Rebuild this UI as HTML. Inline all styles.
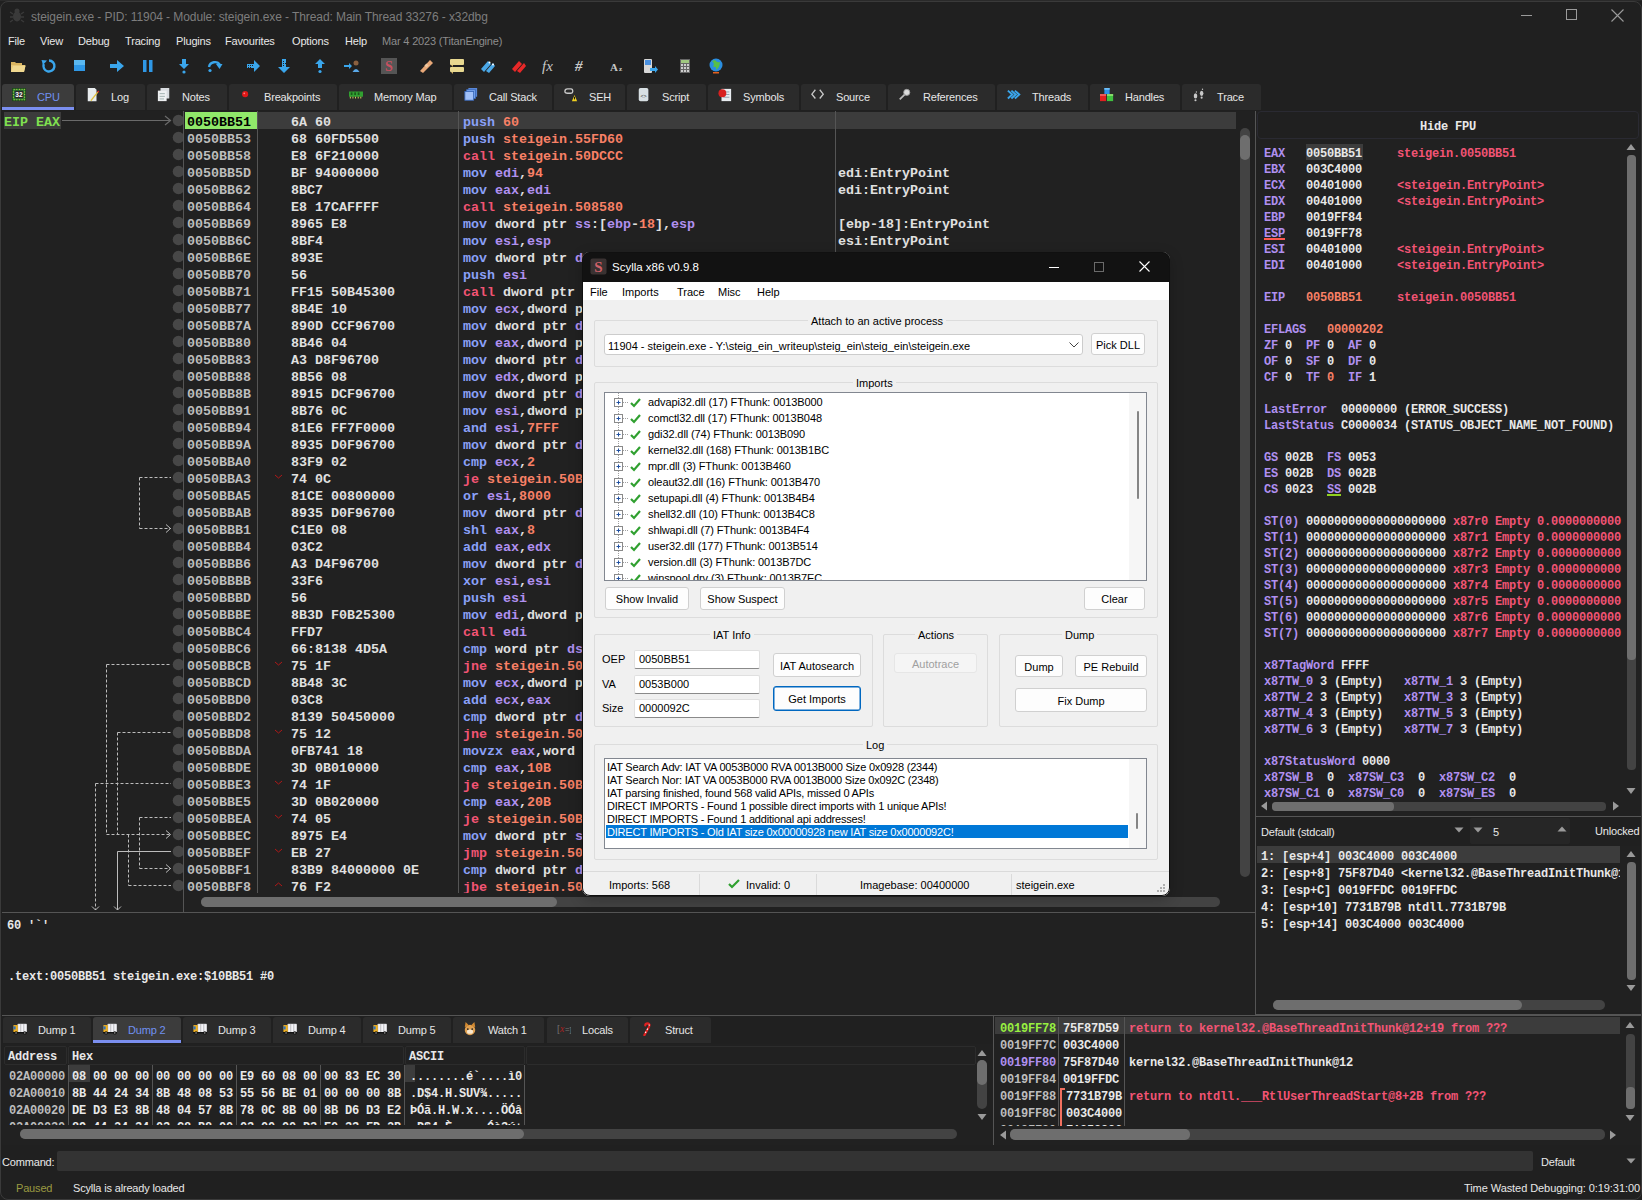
<!DOCTYPE html><html><head><meta charset="utf-8"><style>
*{margin:0;padding:0;box-sizing:border-box}
html,body{width:1642px;height:1200px;overflow:hidden;background:#202020;}
body{position:relative;font-family:'Liberation Sans', sans-serif;color:#e0e0e0;}
.a{position:absolute}
.m{font-family:'Liberation Mono', monospace;font-weight:bold;font-size:13.333px;white-space:pre;}
.ms{font-family:'Liberation Mono', monospace;font-weight:bold;font-size:12px;letter-spacing:-0.2px;white-space:pre;}
.ui{font-family:'Liberation Sans', sans-serif;font-size:11px;letter-spacing:-0.17px;white-space:pre;}
.row{position:absolute;height:17px;line-height:17px;}
.tab{position:absolute;top:84px;height:26px;background:#2b2b2b;border-radius:3px 3px 0 0;}
.tab .lb{position:absolute;top:6px;font-family:'Liberation Sans', sans-serif;font-size:11px;letter-spacing:-0.17px;white-space:pre;color:#e6e6e6;line-height:14px}
.tab .ic{position:absolute;top:4px;width:14px;height:14px}
.dlg{font-family:'Liberation Sans', sans-serif;font-size:11px;color:#000;white-space:pre;padding-top:1px}
.btn{position:absolute;background:#fdfdfd;border:1px solid #d0d0d0;border-radius:3px;text-align:center;font-family:'Liberation Sans', sans-serif;font-size:11px;color:#000;white-space:pre;padding-top:1px}
.grp{position:absolute;border:1px solid #dcdcdc;border-radius:2px}
.gl{position:absolute;background:#f0f0f0;padding:1px 3px 0 3px;font-family:'Liberation Sans', sans-serif;font-size:11px;color:#000;white-space:pre;line-height:14px}
</style></head><body>
<svg class="a" style="left:9px;top:7px" width="16" height="16" viewBox="0 0 16 16"><g fill="#3a3a3a"><ellipse cx="8" cy="9.5" rx="4" ry="5"/><circle cx="8" cy="4" r="2.5"/></g><g stroke="#3a3a3a" stroke-width="1.3" fill="none"><path d="M4 7 L1 5 M4 10 L1 10 M4 13 L1 15 M12 7 L15 5 M12 10 L15 10 M12 13 L15 15"/></g></svg>
<div class="a ui" style="left:31px;top:10px;color:#7d7d7d;font-size:12px;letter-spacing:-0.08px;line-height:14px">steigein.exe - PID: 11904 - Module: steigein.exe - Thread: Main Thread 33276 - x32dbg</div>
<div class="a" style="left:1521px;top:15px;width:11px;height:1px;background:#9a9a9a;"></div>
<div class="a" style="left:1566px;top:9px;width:11px;height:11px;border:1px solid #9a9a9a"></div>
<svg class="a" style="left:1611px;top:9px" width="13" height="13"><path d="M0.5 0.5 L12.5 12.5 M12.5 0.5 L0.5 12.5" stroke="#9a9a9a" stroke-width="1.1"/></svg>
<div class="a ui" style="left:8px;top:34px;color:#e8e8e8;line-height:14px">File</div>
<div class="a ui" style="left:40px;top:34px;color:#e8e8e8;line-height:14px">View</div>
<div class="a ui" style="left:78px;top:34px;color:#e8e8e8;line-height:14px">Debug</div>
<div class="a ui" style="left:125px;top:34px;color:#e8e8e8;line-height:14px">Tracing</div>
<div class="a ui" style="left:176px;top:34px;color:#e8e8e8;line-height:14px">Plugins</div>
<div class="a ui" style="left:225px;top:34px;color:#e8e8e8;line-height:14px">Favourites</div>
<div class="a ui" style="left:292px;top:34px;color:#e8e8e8;line-height:14px">Options</div>
<div class="a ui" style="left:345px;top:34px;color:#e8e8e8;line-height:14px">Help</div>
<div class="a ui" style="left:382px;top:34px;color:#8c8c8c;line-height:14px">Mar 4 2023 (TitanEngine)</div>
<svg class="a" style="left:10px;top:58px" width="16" height="16" viewBox="0 0 16 16"><path d="M1 5 L1 14 L14 14 L15.5 7 L5 7 L4 5 Z" fill="#e8c878"/><path d="M1 4 L5 4 L6 5 L12 5 L12 7 L1 7Z" fill="#d9b460"/><path d="M3 8 L15.5 8 L14 14 L1 14Z" fill="#f0d890"/></svg>
<svg class="a" style="left:41px;top:58px" width="16" height="16" viewBox="0 0 16 16"><path d="M8 2.5 A5.5 5.5 0 1 1 2.8 6" fill="none" stroke="#3aa6ec" stroke-width="2.4"/><path d="M0.5 2 L6 2.5 L2 7Z" fill="#3aa6ec"/></svg>
<svg class="a" style="left:72px;top:58px" width="16" height="16" viewBox="0 0 16 16"><rect x="2" y="2" width="11" height="11" fill="#2f98e6"/><rect x="2" y="2" width="11" height="5" fill="#5ab8f0"/></svg>
<svg class="a" style="left:109px;top:58px" width="16" height="16" viewBox="0 0 16 16"><path d="M1 6 L8 6 L8 2 L15 8 L8 14 L8 10 L1 10Z" fill="#3aa6ec"/></svg>
<svg class="a" style="left:140px;top:58px" width="16" height="16" viewBox="0 0 16 16"><rect x="3" y="2" width="3.5" height="12" fill="#2f98e6"/><rect x="9" y="2" width="3.5" height="12" fill="#2f98e6"/></svg>
<svg class="a" style="left:176px;top:58px" width="16" height="16" viewBox="0 0 16 16"><path d="M6 1 L10 1 L10 6 L13 6 L8 11 L3 6 L6 6Z" fill="#3aa6ec"/><circle cx="8" cy="14" r="1.6" fill="#3aa6ec"/></svg>
<svg class="a" style="left:207px;top:58px" width="16" height="16" viewBox="0 0 16 16"><path d="M2 9 A6 6 0 0 1 13 7" fill="none" stroke="#3aa6ec" stroke-width="2.4"/><path d="M9 6 L15.5 6 L12.5 11Z" fill="#3aa6ec"/><circle cx="3" cy="12.5" r="1.6" fill="#3aa6ec"/></svg>
<svg class="a" style="left:245px;top:58px" width="16" height="16" viewBox="0 0 16 16"><path d="M2 6 L9 6 L9 2 L15 8 L9 14 L9 10 L2 10Z" fill="#3aa6ec"/><g fill="#222"><rect x="3" y="7" width="1" height="1"/><rect x="5" y="7" width="1" height="1"/><rect x="7" y="7" width="1" height="1"/><rect x="3" y="9" width="1" height="1"/><rect x="5" y="9" width="1" height="1"/></g></svg>
<svg class="a" style="left:276px;top:58px" width="16" height="16" viewBox="0 0 16 16"><path d="M6 1 L10 1 L10 9 L14 9 L8 15 L2 9 L6 9Z" fill="#3aa6ec"/><g fill="#222"><rect x="7" y="3" width="1" height="1"/><rect x="7" y="5" width="1" height="1"/><rect x="7" y="7" width="1" height="1"/><rect x="9" y="5" width="1" height="1"/></g></svg>
<svg class="a" style="left:312px;top:58px" width="16" height="16" viewBox="0 0 16 16"><path d="M8 1 L13 6 L10 6 L10 10 L6 10 L6 6 L3 6Z" fill="#3aa6ec"/><circle cx="8" cy="13.5" r="1.6" fill="#3aa6ec"/></svg>
<svg class="a" style="left:344px;top:58px" width="16" height="16" viewBox="0 0 16 16"><path d="M0 7 L5 7 L5 5 L8 8 L5 11 L5 9 L0 9Z" fill="#3aa6ec"/><circle cx="12" cy="5" r="2.5" fill="#8a6040"/><path d="M8.5 14 Q12 8 15.5 14Z" fill="#5aa8e8"/></svg>
<svg class="a" style="left:381px;top:58px" width="16" height="16" viewBox="0 0 16 16"><rect x="0" y="0" width="16" height="16" fill="#555"/><text x="8" y="13" font-family="Liberation Serif" font-weight="bold" font-size="14" fill="#c85060" text-anchor="middle">S</text></svg>
<svg class="a" style="left:418px;top:58px" width="16" height="16" viewBox="0 0 16 16"><path d="M2 13 L12 2 L15 5 L5 15Z" fill="#e8a878"/><rect x="7" y="6" width="3" height="3" fill="#f0c8a0" transform="rotate(45 8.5 7.5)"/></svg>
<svg class="a" style="left:449px;top:58px" width="16" height="16" viewBox="0 0 16 16"><rect x="1" y="1" width="14" height="6" rx="1" fill="#e8d890"/><rect x="1" y="9" width="14" height="5" rx="1" fill="#e8d890"/><path d="M2 7 L4 9 L4 7Z M2 14 L4 16 L4 14Z" fill="#d0b060"/></svg>
<svg class="a" style="left:480px;top:58px" width="16" height="16" viewBox="0 0 16 16"><path d="M1 11 L8 3 L11 6 L4 14Z" fill="#4aa8e8"/><path d="M6 13 L13 5 L15 8 L9 15Z" fill="#4aa8e8"/><circle cx="9.5" cy="4.5" r="1" fill="#fff"/><circle cx="13" cy="6.5" r="1" fill="#fff"/></svg>
<svg class="a" style="left:511px;top:58px" width="16" height="16" viewBox="0 0 16 16"><path d="M1 11 L8 3 L11 6 L4 14Z" fill="#e82828"/><path d="M6 13 L13 5 L15 8 L9 15Z" fill="#e82828"/></svg>
<svg class="a" style="left:542px;top:58px" width="16" height="16" viewBox="0 0 16 16"><text x="0" y="13" font-family="Liberation Serif" font-style="italic" font-size="15" fill="#c8c8c8">fx</text></svg>
<svg class="a" style="left:573px;top:58px" width="16" height="16" viewBox="0 0 16 16"><text x="2" y="13" font-family="Liberation Serif" font-style="italic" font-weight="bold" font-size="15" fill="#c8c8c8">#</text></svg>
<svg class="a" style="left:610px;top:58px" width="16" height="16" viewBox="0 0 16 16"><text x="0" y="13" font-family="Liberation Serif" font-weight="bold" font-size="11" fill="#c8c8c8">A</text><text x="9" y="13" font-family="Liberation Serif" font-weight="bold" font-size="7" fill="#c8c8c8">z</text></svg>
<svg class="a" style="left:642px;top:58px" width="16" height="16" viewBox="0 0 16 16"><rect x="2" y="1" width="8" height="14" rx="1" fill="#d8d8d8"/><rect x="3" y="2" width="6" height="5" fill="#4a90e0"/><path d="M8 10 L13 10 L13 8 L16 11.5 L13 15 L13 13 L8 13Z" fill="#3aa6ec"/></svg>
<svg class="a" style="left:677px;top:58px" width="16" height="16" viewBox="0 0 16 16"><rect x="3" y="1" width="10" height="14" fill="#666"/><rect x="4" y="2" width="8" height="3" fill="#a0c880"/><g fill="#ccc"><rect x="4" y="6" width="2" height="2"/><rect x="7" y="6" width="2" height="2"/><rect x="10" y="6" width="2" height="2"/><rect x="4" y="9" width="2" height="2"/><rect x="7" y="9" width="2" height="2"/><rect x="10" y="9" width="2" height="2"/><rect x="4" y="12" width="2" height="2"/><rect x="7" y="12" width="2" height="2"/><rect x="10" y="12" width="2" height="2"/></g></svg>
<svg class="a" style="left:708px;top:58px" width="16" height="16" viewBox="0 0 16 16"><circle cx="8" cy="7" r="6.5" fill="#2a8ee0"/><path d="M4 3 Q7 5 5 9 Q9 8 8 12 Q12 9 12 4 Q9 5 7 2Z" fill="#58c048"/><rect x="5" y="14" width="6" height="1.5" fill="#e06020"/></svg>
<div class="tab" style="left:2px;width:72px;background:#3c3c3c">
<svg class="ic" style="left:10px" width="16" height="16" viewBox="0 0 16 16"><rect x="0.5" y="0.5" width="15" height="14" fill="#2e8a2e" stroke="#1a4a1a"/><rect x="3" y="3" width="10" height="9" fill="#2a2a2a"/><text x="8" y="10.5" font-family="Liberation Sans" font-weight="bold" font-size="7.5" fill="#ffffff" text-anchor="middle">32</text><g fill="#e8d060"><rect x="2" y="1" width="1" height="1"/><rect x="5" y="1" width="1" height="1"/><rect x="8" y="1" width="1" height="1"/><rect x="11" y="1" width="1" height="1"/><rect x="14" y="1" width="1" height="1"/><rect x="2" y="13" width="1" height="1"/><rect x="5" y="13" width="1" height="1"/><rect x="8" y="13" width="1" height="1"/><rect x="11" y="13" width="1" height="1"/><rect x="14" y="13" width="1" height="1"/><rect x="1" y="4" width="1" height="1"/><rect x="1" y="7" width="1" height="1"/><rect x="1" y="10" width="1" height="1"/><rect x="14" y="4" width="1" height="1"/><rect x="14" y="7" width="1" height="1"/><rect x="14" y="10" width="1" height="1"/></g></svg>
<div class="lb" style="left:35px;color:#7090f0">CPU</div>
<div class="a" style="left:0;top:23px;width:100%;height:3px;background:#7b8ff0"></div>
</div>
<div class="tab" style="left:76px;width:69px;background:#2b2b2b">
<svg class="ic" style="left:10px" width="16" height="16" viewBox="0 0 16 16"><path d="M2 0 L10 0 L12 2 L12 15 L2 15Z" fill="#e8ecee"/><path d="M5 14 L13 4 L14 5 L6 15Z" fill="#e0c040"/><circle cx="14" cy="4" r="1" fill="#e02020"/></svg>
<div class="lb" style="left:35px;color:#e6e6e6">Log</div>
</div>
<div class="tab" style="left:147px;width:80px;background:#2b2b2b">
<svg class="ic" style="left:10px" width="16" height="16" viewBox="0 0 16 16"><rect x="4" y="0" width="10" height="12" fill="#d8dce0"/><rect x="1" y="3" width="10" height="12" fill="#eef0f2"/><g fill="#9aa"><rect x="3" y="6" width="6" height="1"/><rect x="3" y="9" width="6" height="1"/><rect x="3" y="12" width="5" height="1"/></g></svg>
<div class="lb" style="left:35px;color:#e6e6e6">Notes</div>
</div>
<div class="tab" style="left:229px;width:108px;background:#2b2b2b">
<svg class="ic" style="left:10px" width="16" height="16" viewBox="0 0 16 16"><circle cx="7" cy="7" r="3.5" fill="#e01818"/><circle cx="6" cy="6" r="1" fill="#ff8080"/></svg>
<div class="lb" style="left:35px;color:#e6e6e6">Breakpoints</div>
</div>
<div class="tab" style="left:339px;width:113px;background:#2b2b2b">
<svg class="ic" style="left:10px" width="16" height="16" viewBox="0 0 16 16"><rect x="0" y="4" width="16" height="6" fill="#30a030"/><g fill="#e8e060"><rect x="1" y="10" width="1" height="2"/><rect x="4" y="10" width="1" height="2"/><rect x="7" y="10" width="1" height="2"/><rect x="10" y="10" width="1" height="2"/><rect x="13" y="10" width="1" height="2"/></g><g fill="#1a5a1a"><rect x="2" y="5" width="2" height="3"/><rect x="6" y="5" width="2" height="3"/><rect x="10" y="5" width="2" height="3"/></g></svg>
<div class="lb" style="left:35px;color:#e6e6e6">Memory Map</div>
</div>
<div class="tab" style="left:454px;width:98px;background:#2b2b2b">
<svg class="ic" style="left:10px" width="16" height="16" viewBox="0 0 16 16"><rect x="5" y="0" width="10" height="10" fill="#5a88d8"/><rect x="3" y="2" width="10" height="10" fill="#7aa8f0" stroke="#3a68b8" stroke-width="1"/><rect x="1" y="4" width="10" height="10" fill="#a0c0f8" stroke="#3a68b8" stroke-width="1"/></svg>
<div class="lb" style="left:35px;color:#e6e6e6">Call Stack</div>
</div>
<div class="tab" style="left:554px;width:71px;background:#2b2b2b">
<svg class="ic" style="left:10px" width="16" height="16" viewBox="0 0 16 16"><path d="M1 4 Q1 1 4 1 L8 1 Q10 1 10 4 Q10 6 8 6 L4 6 Q1 6 1 4Z" fill="none" stroke="#c8c8c8" stroke-width="1.5"/><path d="M9 15 L12 8 L15 15Z" fill="#f0d020"/><rect x="11.5" y="10" width="1" height="3" fill="#000"/></svg>
<div class="lb" style="left:35px;color:#e6e6e6">SEH</div>
</div>
<div class="tab" style="left:627px;width:79px;background:#2b2b2b">
<svg class="ic" style="left:10px" width="16" height="16" viewBox="0 0 16 16"><rect x="2" y="0" width="11" height="15" rx="2" fill="#d8e0e4"/><text x="7.5" y="11" font-family="Liberation Mono" font-size="6" fill="#333" text-anchor="middle">&lt;&gt;</text></svg>
<div class="lb" style="left:35px;color:#e6e6e6">Script</div>
</div>
<div class="tab" style="left:708px;width:91px;background:#2b2b2b">
<svg class="ic" style="left:10px" width="16" height="16" viewBox="0 0 16 16"><rect x="4" y="1" width="11" height="14" fill="#e8ecf0"/><g fill="#8899aa"><rect x="8" y="4" width="5" height="1"/><rect x="8" y="7" width="5" height="1"/><rect x="6" y="10" width="7" height="1"/></g><circle cx="5" cy="6" r="4.5" fill="#d82020"/></svg>
<div class="lb" style="left:35px;color:#e6e6e6">Symbols</div>
</div>
<div class="tab" style="left:801px;width:85px;background:#2b2b2b">
<svg class="ic" style="left:10px" width="16" height="16" viewBox="0 0 16 16"><path d="M5 2 L1 7 L5 12 M10 2 L14 7 L10 12" fill="none" stroke="#c8c8c8" stroke-width="1.5"/></svg>
<div class="lb" style="left:35px;color:#e6e6e6">Source</div>
</div>
<div class="tab" style="left:888px;width:107px;background:#2b2b2b">
<svg class="ic" style="left:10px" width="16" height="16" viewBox="0 0 16 16"><circle cx="10" cy="5" r="3.5" fill="#ddd" stroke="#999" stroke-width="1"/><path d="M7.5 7.5 L2 13" stroke="#bbb" stroke-width="2"/></svg>
<div class="lb" style="left:35px;color:#e6e6e6">References</div>
</div>
<div class="tab" style="left:997px;width:91px;background:#2b2b2b">
<svg class="ic" style="left:10px" width="16" height="16" viewBox="0 0 16 16"><path d="M1 3 L6 7.5 L1 12 M5 3 L10 7.5 L5 12 M9 3 L14 7.5 L9 12" fill="none" stroke="#3aa6ec" stroke-width="2.2"/></svg>
<div class="lb" style="left:35px;color:#e6e6e6">Threads</div>
</div>
<div class="tab" style="left:1090px;width:90px;background:#2b2b2b">
<svg class="ic" style="left:10px" width="16" height="16" viewBox="0 0 16 16"><rect x="5" y="0" width="6" height="7" fill="#2a90e8"/><rect x="5" y="0" width="6" height="2" fill="#70c0f8"/><rect x="0" y="7" width="7" height="8" fill="#e02020"/><rect x="0" y="7" width="7" height="2" fill="#f06060"/><rect x="8" y="7" width="7" height="8" fill="#40c040"/><rect x="8" y="7" width="7" height="2" fill="#90e070"/></svg>
<div class="lb" style="left:35px;color:#e6e6e6">Handles</div>
</div>
<div class="tab" style="left:1182px;width:79px;background:#2b2b2b">
<svg class="ic" style="left:10px" width="16" height="16" viewBox="0 0 16 16"><g fill="#c8c8c8"><ellipse cx="4" cy="9" rx="2" ry="3"/><ellipse cx="11" cy="6" rx="2" ry="3"/><circle cx="4" cy="14" r="1.2"/><circle cx="11" cy="11" r="1.2"/><circle cx="12" cy="1.5" r="0.8"/><circle cx="5" cy="4.5" r="0.8"/></g></svg>
<div class="lb" style="left:35px;color:#e6e6e6">Trace</div>
</div>
<div class="a" style="left:2px;top:111px;width:1253px;height:801px;background:#212121;"></div>
<div class="a" style="left:0;top:112px;width:1238px;height:781px;overflow:hidden">
<div class="a" style="left:258px;top:0px;width:978px;height:17px;background:#3c3c3c;"></div>
<div class="a" style="left:185px;top:0px;width:72px;height:17px;background:#90e86a;"></div>
<div class="a" style="left:4px;top:0px;width:57px;height:17px;background:#3c3c3c;"></div>
<div class="a m" style="left:4px;top:2px;line-height:17px;color:#80e050">EIP EAX</div>
<div class="row m" style="left:187px;top:2px;color:#000000">0050BB51</div>
<div class="row m" style="left:291px;top:2px;color:#e0e0e0">6A 60</div>
<div class="row m" style="left:463px;top:2px"><span style="color:#8aa0f8">push</span> <span style="color:#f88066">60</span></div>
<div class="row m" style="left:187px;top:19px;color:#bdbdbd">0050BB53</div>
<div class="row m" style="left:291px;top:19px;color:#e0e0e0">68 60FD5500</div>
<div class="row m" style="left:463px;top:19px"><span style="color:#8aa0f8">push</span> <span style="color:#f88066">steigein.55FD60</span></div>
<div class="row m" style="left:187px;top:36px;color:#bdbdbd">0050BB58</div>
<div class="row m" style="left:291px;top:36px;color:#e0e0e0">E8 6F210000</div>
<div class="row m" style="left:463px;top:36px"><span style="color:#f25474">call</span> <span style="color:#f88066">steigein.50DCCC</span></div>
<div class="row m" style="left:187px;top:53px;color:#bdbdbd">0050BB5D</div>
<div class="row m" style="left:291px;top:53px;color:#e0e0e0">BF 94000000</div>
<div class="row m" style="left:463px;top:53px"><span style="color:#8aa0f8">mov</span> <span style="color:#b090f0">edi</span><span style="color:#e0e0e0">,</span><span style="color:#f88066">94</span></div>
<div class="row m" style="left:838px;top:53px;color:#e0e0e0">edi:EntryPoint</div>
<div class="row m" style="left:187px;top:70px;color:#bdbdbd">0050BB62</div>
<div class="row m" style="left:291px;top:70px;color:#e0e0e0">8BC7</div>
<div class="row m" style="left:463px;top:70px"><span style="color:#8aa0f8">mov</span> <span style="color:#b090f0">eax</span><span style="color:#e0e0e0">,</span><span style="color:#b090f0">edi</span></div>
<div class="row m" style="left:838px;top:70px;color:#e0e0e0">edi:EntryPoint</div>
<div class="row m" style="left:187px;top:87px;color:#bdbdbd">0050BB64</div>
<div class="row m" style="left:291px;top:87px;color:#e0e0e0">E8 17CAFFFF</div>
<div class="row m" style="left:463px;top:87px"><span style="color:#f25474">call</span> <span style="color:#f88066">steigein.508580</span></div>
<div class="row m" style="left:187px;top:104px;color:#bdbdbd">0050BB69</div>
<div class="row m" style="left:291px;top:104px;color:#e0e0e0">8965 E8</div>
<div class="row m" style="left:463px;top:104px"><span style="color:#8aa0f8">mov</span> <span style="color:#e0e0e0">dword</span><span style="color:#e0e0e0"> </span><span style="color:#e0e0e0">ptr</span><span style="color:#e0e0e0"> </span><span style="color:#b090f0">ss</span><span style="color:#e0e0e0">:</span><span style="color:#e0e0e0">[</span><span style="color:#b090f0">ebp</span><span style="color:#e0e0e0">-</span><span style="color:#f88066">18</span><span style="color:#e0e0e0">]</span><span style="color:#e0e0e0">,</span><span style="color:#b090f0">esp</span></div>
<div class="row m" style="left:838px;top:104px;color:#e0e0e0">[ebp-18]:EntryPoint</div>
<div class="row m" style="left:187px;top:121px;color:#bdbdbd">0050BB6C</div>
<div class="row m" style="left:291px;top:121px;color:#e0e0e0">8BF4</div>
<div class="row m" style="left:463px;top:121px"><span style="color:#8aa0f8">mov</span> <span style="color:#b090f0">esi</span><span style="color:#e0e0e0">,</span><span style="color:#b090f0">esp</span></div>
<div class="row m" style="left:838px;top:121px;color:#e0e0e0">esi:EntryPoint</div>
<div class="row m" style="left:187px;top:138px;color:#bdbdbd">0050BB6E</div>
<div class="row m" style="left:291px;top:138px;color:#e0e0e0">893E</div>
<div class="row m" style="left:463px;top:138px"><span style="color:#8aa0f8">mov</span> <span style="color:#e0e0e0">dword</span><span style="color:#e0e0e0"> </span><span style="color:#e0e0e0">ptr</span><span style="color:#e0e0e0"> </span><span style="color:#b090f0">ds</span><span style="color:#e0e0e0">:</span><span style="color:#e0e0e0">[</span><span style="color:#b090f0">esi</span><span style="color:#e0e0e0">]</span><span style="color:#e0e0e0">,</span><span style="color:#b090f0">edi</span></div>
<div class="row m" style="left:838px;top:138px;color:#e0e0e0">[esi]:EntryPoint</div>
<div class="row m" style="left:187px;top:155px;color:#bdbdbd">0050BB70</div>
<div class="row m" style="left:291px;top:155px;color:#e0e0e0">56</div>
<div class="row m" style="left:463px;top:155px"><span style="color:#8aa0f8">push</span> <span style="color:#b090f0">esi</span></div>
<div class="row m" style="left:187px;top:172px;color:#bdbdbd">0050BB71</div>
<div class="row m" style="left:291px;top:172px;color:#e0e0e0">FF15 50B45300</div>
<div class="row m" style="left:463px;top:172px"><span style="color:#f25474">call</span> <span style="color:#e0e0e0">dword</span><span style="color:#e0e0e0"> </span><span style="color:#e0e0e0">ptr</span><span style="color:#e0e0e0"> </span><span style="color:#b090f0">ds</span><span style="color:#e0e0e0">:</span><span style="color:#e0e0e0">[</span><span style="color:#e0e0e0">&lt;</span><span style="color:#e0e0e0">&amp;</span><span style="color:#e0e0e0">GetVersionExA</span><span style="color:#e0e0e0">&gt;</span><span style="color:#e0e0e0">]</span></div>
<div class="row m" style="left:187px;top:189px;color:#bdbdbd">0050BB77</div>
<div class="row m" style="left:291px;top:189px;color:#e0e0e0">8B4E 10</div>
<div class="row m" style="left:463px;top:189px"><span style="color:#8aa0f8">mov</span> <span style="color:#b090f0">ecx</span><span style="color:#e0e0e0">,</span><span style="color:#e0e0e0">dword</span><span style="color:#e0e0e0"> </span><span style="color:#e0e0e0">ptr</span><span style="color:#e0e0e0"> </span><span style="color:#b090f0">ds</span><span style="color:#e0e0e0">:</span><span style="color:#e0e0e0">[</span><span style="color:#b090f0">esi</span><span style="color:#e0e0e0">+</span><span style="color:#f88066">10</span><span style="color:#e0e0e0">]</span></div>
<div class="row m" style="left:187px;top:206px;color:#bdbdbd">0050BB7A</div>
<div class="row m" style="left:291px;top:206px;color:#e0e0e0">890D CCF96700</div>
<div class="row m" style="left:463px;top:206px"><span style="color:#8aa0f8">mov</span> <span style="color:#e0e0e0">dword</span><span style="color:#e0e0e0"> </span><span style="color:#e0e0e0">ptr</span><span style="color:#e0e0e0"> </span><span style="color:#b090f0">ds</span><span style="color:#e0e0e0">:</span><span style="color:#e0e0e0">[</span><span style="color:#f88066">67F9CC</span><span style="color:#e0e0e0">]</span><span style="color:#e0e0e0">,</span><span style="color:#b090f0">ecx</span></div>
<div class="row m" style="left:187px;top:223px;color:#bdbdbd">0050BB80</div>
<div class="row m" style="left:291px;top:223px;color:#e0e0e0">8B46 04</div>
<div class="row m" style="left:463px;top:223px"><span style="color:#8aa0f8">mov</span> <span style="color:#b090f0">eax</span><span style="color:#e0e0e0">,</span><span style="color:#e0e0e0">dword</span><span style="color:#e0e0e0"> </span><span style="color:#e0e0e0">ptr</span><span style="color:#e0e0e0"> </span><span style="color:#b090f0">ds</span><span style="color:#e0e0e0">:</span><span style="color:#e0e0e0">[</span><span style="color:#b090f0">esi</span><span style="color:#e0e0e0">+</span><span style="color:#f88066">4</span><span style="color:#e0e0e0">]</span></div>
<div class="row m" style="left:187px;top:240px;color:#bdbdbd">0050BB83</div>
<div class="row m" style="left:291px;top:240px;color:#e0e0e0">A3 D8F96700</div>
<div class="row m" style="left:463px;top:240px"><span style="color:#8aa0f8">mov</span> <span style="color:#e0e0e0">dword</span><span style="color:#e0e0e0"> </span><span style="color:#e0e0e0">ptr</span><span style="color:#e0e0e0"> </span><span style="color:#b090f0">ds</span><span style="color:#e0e0e0">:</span><span style="color:#e0e0e0">[</span><span style="color:#f88066">67F9D8</span><span style="color:#e0e0e0">]</span><span style="color:#e0e0e0">,</span><span style="color:#b090f0">eax</span></div>
<div class="row m" style="left:187px;top:257px;color:#bdbdbd">0050BB88</div>
<div class="row m" style="left:291px;top:257px;color:#e0e0e0">8B56 08</div>
<div class="row m" style="left:463px;top:257px"><span style="color:#8aa0f8">mov</span> <span style="color:#b090f0">edx</span><span style="color:#e0e0e0">,</span><span style="color:#e0e0e0">dword</span><span style="color:#e0e0e0"> </span><span style="color:#e0e0e0">ptr</span><span style="color:#e0e0e0"> </span><span style="color:#b090f0">ds</span><span style="color:#e0e0e0">:</span><span style="color:#e0e0e0">[</span><span style="color:#b090f0">esi</span><span style="color:#e0e0e0">+</span><span style="color:#f88066">8</span><span style="color:#e0e0e0">]</span></div>
<div class="row m" style="left:187px;top:274px;color:#bdbdbd">0050BB8B</div>
<div class="row m" style="left:291px;top:274px;color:#e0e0e0">8915 DCF96700</div>
<div class="row m" style="left:463px;top:274px"><span style="color:#8aa0f8">mov</span> <span style="color:#e0e0e0">dword</span><span style="color:#e0e0e0"> </span><span style="color:#e0e0e0">ptr</span><span style="color:#e0e0e0"> </span><span style="color:#b090f0">ds</span><span style="color:#e0e0e0">:</span><span style="color:#e0e0e0">[</span><span style="color:#f88066">67F9DC</span><span style="color:#e0e0e0">]</span><span style="color:#e0e0e0">,</span><span style="color:#b090f0">edx</span></div>
<div class="row m" style="left:187px;top:291px;color:#bdbdbd">0050BB91</div>
<div class="row m" style="left:291px;top:291px;color:#e0e0e0">8B76 0C</div>
<div class="row m" style="left:463px;top:291px"><span style="color:#8aa0f8">mov</span> <span style="color:#b090f0">esi</span><span style="color:#e0e0e0">,</span><span style="color:#e0e0e0">dword</span><span style="color:#e0e0e0"> </span><span style="color:#e0e0e0">ptr</span><span style="color:#e0e0e0"> </span><span style="color:#b090f0">ds</span><span style="color:#e0e0e0">:</span><span style="color:#e0e0e0">[</span><span style="color:#b090f0">esi</span><span style="color:#e0e0e0">+</span><span style="color:#f88066">C</span><span style="color:#e0e0e0">]</span></div>
<div class="row m" style="left:187px;top:308px;color:#bdbdbd">0050BB94</div>
<div class="row m" style="left:291px;top:308px;color:#e0e0e0">81E6 FF7F0000</div>
<div class="row m" style="left:463px;top:308px"><span style="color:#8aa0f8">and</span> <span style="color:#b090f0">esi</span><span style="color:#e0e0e0">,</span><span style="color:#f88066">7FFF</span></div>
<div class="row m" style="left:187px;top:325px;color:#bdbdbd">0050BB9A</div>
<div class="row m" style="left:291px;top:325px;color:#e0e0e0">8935 D0F96700</div>
<div class="row m" style="left:463px;top:325px"><span style="color:#8aa0f8">mov</span> <span style="color:#e0e0e0">dword</span><span style="color:#e0e0e0"> </span><span style="color:#e0e0e0">ptr</span><span style="color:#e0e0e0"> </span><span style="color:#b090f0">ds</span><span style="color:#e0e0e0">:</span><span style="color:#e0e0e0">[</span><span style="color:#f88066">67F9D0</span><span style="color:#e0e0e0">]</span><span style="color:#e0e0e0">,</span><span style="color:#b090f0">esi</span></div>
<div class="row m" style="left:187px;top:342px;color:#bdbdbd">0050BBA0</div>
<div class="row m" style="left:291px;top:342px;color:#e0e0e0">83F9 02</div>
<div class="row m" style="left:463px;top:342px"><span style="color:#8aa0f8">cmp</span> <span style="color:#b090f0">ecx</span><span style="color:#e0e0e0">,</span><span style="color:#f88066">2</span></div>
<div class="row m" style="left:187px;top:359px;color:#bdbdbd">0050BBA3</div>
<div class="row m" style="left:291px;top:359px;color:#e0e0e0">74 0C</div>
<div class="row m" style="left:463px;top:359px"><span style="color:#f25474">je</span> <span style="color:#f88066">steigein.50BBB1</span></div>
<div class="row m" style="left:187px;top:376px;color:#bdbdbd">0050BBA5</div>
<div class="row m" style="left:291px;top:376px;color:#e0e0e0">81CE 00800000</div>
<div class="row m" style="left:463px;top:376px"><span style="color:#8aa0f8">or</span> <span style="color:#b090f0">esi</span><span style="color:#e0e0e0">,</span><span style="color:#f88066">8000</span></div>
<div class="row m" style="left:187px;top:393px;color:#bdbdbd">0050BBAB</div>
<div class="row m" style="left:291px;top:393px;color:#e0e0e0">8935 D0F96700</div>
<div class="row m" style="left:463px;top:393px"><span style="color:#8aa0f8">mov</span> <span style="color:#e0e0e0">dword</span><span style="color:#e0e0e0"> </span><span style="color:#e0e0e0">ptr</span><span style="color:#e0e0e0"> </span><span style="color:#b090f0">ds</span><span style="color:#e0e0e0">:</span><span style="color:#e0e0e0">[</span><span style="color:#f88066">67F9D0</span><span style="color:#e0e0e0">]</span><span style="color:#e0e0e0">,</span><span style="color:#b090f0">esi</span></div>
<div class="row m" style="left:187px;top:410px;color:#bdbdbd">0050BBB1</div>
<div class="row m" style="left:291px;top:410px;color:#e0e0e0">C1E0 08</div>
<div class="row m" style="left:463px;top:410px"><span style="color:#8aa0f8">shl</span> <span style="color:#b090f0">eax</span><span style="color:#e0e0e0">,</span><span style="color:#f88066">8</span></div>
<div class="row m" style="left:187px;top:427px;color:#bdbdbd">0050BBB4</div>
<div class="row m" style="left:291px;top:427px;color:#e0e0e0">03C2</div>
<div class="row m" style="left:463px;top:427px"><span style="color:#8aa0f8">add</span> <span style="color:#b090f0">eax</span><span style="color:#e0e0e0">,</span><span style="color:#b090f0">edx</span></div>
<div class="row m" style="left:187px;top:444px;color:#bdbdbd">0050BBB6</div>
<div class="row m" style="left:291px;top:444px;color:#e0e0e0">A3 D4F96700</div>
<div class="row m" style="left:463px;top:444px"><span style="color:#8aa0f8">mov</span> <span style="color:#e0e0e0">dword</span><span style="color:#e0e0e0"> </span><span style="color:#e0e0e0">ptr</span><span style="color:#e0e0e0"> </span><span style="color:#b090f0">ds</span><span style="color:#e0e0e0">:</span><span style="color:#e0e0e0">[</span><span style="color:#f88066">67F9D4</span><span style="color:#e0e0e0">]</span><span style="color:#e0e0e0">,</span><span style="color:#b090f0">eax</span></div>
<div class="row m" style="left:187px;top:461px;color:#bdbdbd">0050BBBB</div>
<div class="row m" style="left:291px;top:461px;color:#e0e0e0">33F6</div>
<div class="row m" style="left:463px;top:461px"><span style="color:#8aa0f8">xor</span> <span style="color:#b090f0">esi</span><span style="color:#e0e0e0">,</span><span style="color:#b090f0">esi</span></div>
<div class="row m" style="left:187px;top:478px;color:#bdbdbd">0050BBBD</div>
<div class="row m" style="left:291px;top:478px;color:#e0e0e0">56</div>
<div class="row m" style="left:463px;top:478px"><span style="color:#8aa0f8">push</span> <span style="color:#b090f0">esi</span></div>
<div class="row m" style="left:187px;top:495px;color:#bdbdbd">0050BBBE</div>
<div class="row m" style="left:291px;top:495px;color:#e0e0e0">8B3D F0B25300</div>
<div class="row m" style="left:463px;top:495px"><span style="color:#8aa0f8">mov</span> <span style="color:#b090f0">edi</span><span style="color:#e0e0e0">,</span><span style="color:#e0e0e0">dword</span><span style="color:#e0e0e0"> </span><span style="color:#e0e0e0">ptr</span><span style="color:#e0e0e0"> </span><span style="color:#b090f0">ds</span><span style="color:#e0e0e0">:</span><span style="color:#e0e0e0">[</span><span style="color:#e0e0e0">&lt;</span><span style="color:#e0e0e0">&amp;</span><span style="color:#e0e0e0">GetModuleHandleA</span><span style="color:#e0e0e0">&gt;</span><span style="color:#e0e0e0">]</span></div>
<div class="row m" style="left:187px;top:512px;color:#bdbdbd">0050BBC4</div>
<div class="row m" style="left:291px;top:512px;color:#e0e0e0">FFD7</div>
<div class="row m" style="left:463px;top:512px"><span style="color:#f25474">call</span> <span style="color:#b090f0">edi</span></div>
<div class="row m" style="left:187px;top:529px;color:#bdbdbd">0050BBC6</div>
<div class="row m" style="left:291px;top:529px;color:#e0e0e0">66:8138 4D5A</div>
<div class="row m" style="left:463px;top:529px"><span style="color:#8aa0f8">cmp</span> <span style="color:#e0e0e0">word</span><span style="color:#e0e0e0"> </span><span style="color:#e0e0e0">ptr</span><span style="color:#e0e0e0"> </span><span style="color:#b090f0">ds</span><span style="color:#e0e0e0">:</span><span style="color:#e0e0e0">[</span><span style="color:#b090f0">eax</span><span style="color:#e0e0e0">]</span><span style="color:#e0e0e0">,</span><span style="color:#f88066">5A4D</span></div>
<div class="row m" style="left:187px;top:546px;color:#bdbdbd">0050BBCB</div>
<div class="row m" style="left:291px;top:546px;color:#e0e0e0">75 1F</div>
<div class="row m" style="left:463px;top:546px"><span style="color:#f25474">jne</span> <span style="color:#f88066">steigein.50BBEC</span></div>
<div class="row m" style="left:187px;top:563px;color:#bdbdbd">0050BBCD</div>
<div class="row m" style="left:291px;top:563px;color:#e0e0e0">8B48 3C</div>
<div class="row m" style="left:463px;top:563px"><span style="color:#8aa0f8">mov</span> <span style="color:#b090f0">ecx</span><span style="color:#e0e0e0">,</span><span style="color:#e0e0e0">dword</span><span style="color:#e0e0e0"> </span><span style="color:#e0e0e0">ptr</span><span style="color:#e0e0e0"> </span><span style="color:#b090f0">ds</span><span style="color:#e0e0e0">:</span><span style="color:#e0e0e0">[</span><span style="color:#b090f0">eax</span><span style="color:#e0e0e0">+</span><span style="color:#f88066">3C</span><span style="color:#e0e0e0">]</span></div>
<div class="row m" style="left:187px;top:580px;color:#bdbdbd">0050BBD0</div>
<div class="row m" style="left:291px;top:580px;color:#e0e0e0">03C8</div>
<div class="row m" style="left:463px;top:580px"><span style="color:#8aa0f8">add</span> <span style="color:#b090f0">ecx</span><span style="color:#e0e0e0">,</span><span style="color:#b090f0">eax</span></div>
<div class="row m" style="left:187px;top:597px;color:#bdbdbd">0050BBD2</div>
<div class="row m" style="left:291px;top:597px;color:#e0e0e0">8139 50450000</div>
<div class="row m" style="left:463px;top:597px"><span style="color:#8aa0f8">cmp</span> <span style="color:#e0e0e0">dword</span><span style="color:#e0e0e0"> </span><span style="color:#e0e0e0">ptr</span><span style="color:#e0e0e0"> </span><span style="color:#b090f0">ds</span><span style="color:#e0e0e0">:</span><span style="color:#e0e0e0">[</span><span style="color:#b090f0">ecx</span><span style="color:#e0e0e0">]</span><span style="color:#e0e0e0">,</span><span style="color:#f88066">4550</span></div>
<div class="row m" style="left:187px;top:614px;color:#bdbdbd">0050BBD8</div>
<div class="row m" style="left:291px;top:614px;color:#e0e0e0">75 12</div>
<div class="row m" style="left:463px;top:614px"><span style="color:#f25474">jne</span> <span style="color:#f88066">steigein.50BBEC</span></div>
<div class="row m" style="left:187px;top:631px;color:#bdbdbd">0050BBDA</div>
<div class="row m" style="left:291px;top:631px;color:#e0e0e0">0FB741 18</div>
<div class="row m" style="left:463px;top:631px"><span style="color:#8aa0f8">movzx</span> <span style="color:#b090f0">eax</span><span style="color:#e0e0e0">,</span><span style="color:#e0e0e0">word</span><span style="color:#e0e0e0"> </span><span style="color:#e0e0e0">ptr</span><span style="color:#e0e0e0"> </span><span style="color:#b090f0">ds</span><span style="color:#e0e0e0">:</span><span style="color:#e0e0e0">[</span><span style="color:#b090f0">ecx</span><span style="color:#e0e0e0">+</span><span style="color:#f88066">18</span><span style="color:#e0e0e0">]</span></div>
<div class="row m" style="left:187px;top:648px;color:#bdbdbd">0050BBDE</div>
<div class="row m" style="left:291px;top:648px;color:#e0e0e0">3D 0B010000</div>
<div class="row m" style="left:463px;top:648px"><span style="color:#8aa0f8">cmp</span> <span style="color:#b090f0">eax</span><span style="color:#e0e0e0">,</span><span style="color:#f88066">10B</span></div>
<div class="row m" style="left:187px;top:665px;color:#bdbdbd">0050BBE3</div>
<div class="row m" style="left:291px;top:665px;color:#e0e0e0">74 1F</div>
<div class="row m" style="left:463px;top:665px"><span style="color:#f25474">je</span> <span style="color:#f88066">steigein.50BC04</span></div>
<div class="row m" style="left:187px;top:682px;color:#bdbdbd">0050BBE5</div>
<div class="row m" style="left:291px;top:682px;color:#e0e0e0">3D 0B020000</div>
<div class="row m" style="left:463px;top:682px"><span style="color:#8aa0f8">cmp</span> <span style="color:#b090f0">eax</span><span style="color:#e0e0e0">,</span><span style="color:#f88066">20B</span></div>
<div class="row m" style="left:187px;top:699px;color:#bdbdbd">0050BBEA</div>
<div class="row m" style="left:291px;top:699px;color:#e0e0e0">74 05</div>
<div class="row m" style="left:463px;top:699px"><span style="color:#f25474">je</span> <span style="color:#f88066">steigein.50BBF1</span></div>
<div class="row m" style="left:187px;top:716px;color:#bdbdbd">0050BBEC</div>
<div class="row m" style="left:291px;top:716px;color:#e0e0e0">8975 E4</div>
<div class="row m" style="left:463px;top:716px"><span style="color:#8aa0f8">mov</span> <span style="color:#e0e0e0">dword</span><span style="color:#e0e0e0"> </span><span style="color:#e0e0e0">ptr</span><span style="color:#e0e0e0"> </span><span style="color:#b090f0">ss</span><span style="color:#e0e0e0">:</span><span style="color:#e0e0e0">[</span><span style="color:#b090f0">ebp</span><span style="color:#e0e0e0">-</span><span style="color:#f88066">1C</span><span style="color:#e0e0e0">]</span><span style="color:#e0e0e0">,</span><span style="color:#b090f0">esi</span></div>
<div class="row m" style="left:187px;top:733px;color:#bdbdbd">0050BBEF</div>
<div class="row m" style="left:291px;top:733px;color:#e0e0e0">EB 27</div>
<div class="row m" style="left:463px;top:733px"><span style="color:#f25474">jmp</span> <span style="color:#f88066">steigein.50BC18</span></div>
<div class="row m" style="left:187px;top:750px;color:#bdbdbd">0050BBF1</div>
<div class="row m" style="left:291px;top:750px;color:#e0e0e0">83B9 84000000 0E</div>
<div class="row m" style="left:463px;top:750px"><span style="color:#8aa0f8">cmp</span> <span style="color:#e0e0e0">dword</span><span style="color:#e0e0e0"> </span><span style="color:#e0e0e0">ptr</span><span style="color:#e0e0e0"> </span><span style="color:#b090f0">ds</span><span style="color:#e0e0e0">:</span><span style="color:#e0e0e0">[</span><span style="color:#b090f0">ecx</span><span style="color:#e0e0e0">+</span><span style="color:#f88066">84</span><span style="color:#e0e0e0">]</span><span style="color:#e0e0e0">,</span><span style="color:#f88066">E</span></div>
<div class="row m" style="left:187px;top:767px;color:#bdbdbd">0050BBF8</div>
<div class="row m" style="left:291px;top:767px;color:#e0e0e0">76 F2</div>
<div class="row m" style="left:463px;top:767px"><span style="color:#f25474">jbe</span> <span style="color:#f88066">steigein.50BBEC</span></div>
</div>
<div class="a" style="left:257px;top:111px;width:1px;height:782px;background:#555555;"></div>
<div class="a" style="left:458px;top:111px;width:1px;height:782px;background:#555555;"></div>
<div class="a" style="left:835px;top:111px;width:1px;height:782px;background:#555555;"></div>
<div class="a" style="left:183px;top:111px;width:1px;height:801px;background:#555555;"></div>
<svg class="a" style="left:0;top:111px" width="183" height="800"><circle cx="178.5" cy="9.5" r="5.8" fill="#474747"/><circle cx="178.5" cy="26.5" r="5.8" fill="#474747"/><circle cx="178.5" cy="43.5" r="5.8" fill="#474747"/><circle cx="178.5" cy="60.5" r="5.8" fill="#474747"/><circle cx="178.5" cy="77.5" r="5.8" fill="#474747"/><circle cx="178.5" cy="94.5" r="5.8" fill="#474747"/><circle cx="178.5" cy="111.5" r="5.8" fill="#474747"/><circle cx="178.5" cy="128.5" r="5.8" fill="#474747"/><circle cx="178.5" cy="145.5" r="5.8" fill="#474747"/><circle cx="178.5" cy="162.5" r="5.8" fill="#474747"/><circle cx="178.5" cy="179.5" r="5.8" fill="#474747"/><circle cx="178.5" cy="196.5" r="5.8" fill="#474747"/><circle cx="178.5" cy="213.5" r="5.8" fill="#474747"/><circle cx="178.5" cy="230.5" r="5.8" fill="#474747"/><circle cx="178.5" cy="247.5" r="5.8" fill="#474747"/><circle cx="178.5" cy="264.5" r="5.8" fill="#474747"/><circle cx="178.5" cy="281.5" r="5.8" fill="#474747"/><circle cx="178.5" cy="298.5" r="5.8" fill="#474747"/><circle cx="178.5" cy="315.5" r="5.8" fill="#474747"/><circle cx="178.5" cy="332.5" r="5.8" fill="#474747"/><circle cx="178.5" cy="349.5" r="5.8" fill="#474747"/><circle cx="178.5" cy="366.5" r="5.8" fill="#474747"/><circle cx="178.5" cy="383.5" r="5.8" fill="#474747"/><circle cx="178.5" cy="400.5" r="5.8" fill="#474747"/><circle cx="178.5" cy="417.5" r="5.8" fill="#474747"/><circle cx="178.5" cy="434.5" r="5.8" fill="#474747"/><circle cx="178.5" cy="451.5" r="5.8" fill="#474747"/><circle cx="178.5" cy="468.5" r="5.8" fill="#474747"/><circle cx="178.5" cy="485.5" r="5.8" fill="#474747"/><circle cx="178.5" cy="502.5" r="5.8" fill="#474747"/><circle cx="178.5" cy="519.5" r="5.8" fill="#474747"/><circle cx="178.5" cy="536.5" r="5.8" fill="#474747"/><circle cx="178.5" cy="553.5" r="5.8" fill="#474747"/><circle cx="178.5" cy="570.5" r="5.8" fill="#474747"/><circle cx="178.5" cy="587.5" r="5.8" fill="#474747"/><circle cx="178.5" cy="604.5" r="5.8" fill="#474747"/><circle cx="178.5" cy="621.5" r="5.8" fill="#474747"/><circle cx="178.5" cy="638.5" r="5.8" fill="#474747"/><circle cx="178.5" cy="655.5" r="5.8" fill="#474747"/><circle cx="178.5" cy="672.5" r="5.8" fill="#474747"/><circle cx="178.5" cy="689.5" r="5.8" fill="#474747"/><circle cx="178.5" cy="706.5" r="5.8" fill="#474747"/><circle cx="178.5" cy="723.5" r="5.8" fill="#474747"/><circle cx="178.5" cy="740.5" r="5.8" fill="#474747"/><circle cx="178.5" cy="757.5" r="5.8" fill="#474747"/><circle cx="178.5" cy="774.5" r="5.8" fill="#474747"/><path d="M139.5 366.5 L171 366.5" stroke="#bdbdbd" stroke-width="1" fill="none" stroke-dasharray="3 2"/><path d="M139.5 366.5 L139.5 417.5" stroke="#bdbdbd" stroke-width="1" fill="none" stroke-dasharray="3 2"/><path d="M139.5 417.5 L171 417.5" stroke="#bdbdbd" stroke-width="1" fill="none" stroke-dasharray="3 2"/><path d="M166 413.5 L170.5 417.5 L166 421.5" stroke="#bdbdbd" stroke-width="1" fill="none"/><path d="M106.5 553.5 L171 553.5" stroke="#bdbdbd" stroke-width="1" fill="none" stroke-dasharray="3 2"/><path d="M106.5 553.5 L106.5 723.5" stroke="#bdbdbd" stroke-width="1" fill="none" stroke-dasharray="3 2"/><path d="M106.5 723.5 L171 723.5" stroke="#bdbdbd" stroke-width="1" fill="none" stroke-dasharray="3 2"/><path d="M166 719.5 L170.5 723.5 L166 727.5" stroke="#bdbdbd" stroke-width="1" fill="none"/><path d="M117.5 621.5 L171 621.5" stroke="#bdbdbd" stroke-width="1" fill="none" stroke-dasharray="3 2"/><path d="M117.5 621.5 L117.5 723.5" stroke="#bdbdbd" stroke-width="1" fill="none" stroke-dasharray="3 2"/><path d="M95.5 672.5 L171 672.5" stroke="#bdbdbd" stroke-width="1" fill="none" stroke-dasharray="3 2"/><path d="M95.5 672.5 L95.5 799" stroke="#bdbdbd" fill="none" stroke-dasharray="3 2"/><path d="M92 795.5 L95.5 799 L99 795.5" stroke="#bdbdbd" fill="none"/><path d="M139.5 706.5 L171 706.5" stroke="#bdbdbd" stroke-width="1" fill="none" stroke-dasharray="3 2"/><path d="M139.5 706.5 L139.5 757.5" stroke="#bdbdbd" stroke-width="1" fill="none" stroke-dasharray="3 2"/><path d="M139.5 757.5 L171 757.5" stroke="#bdbdbd" stroke-width="1" fill="none" stroke-dasharray="3 2"/><path d="M166 753.5 L170.5 757.5 L166 761.5" stroke="#bdbdbd" stroke-width="1" fill="none"/><path d="M117.5 740.5 L171 740.5" stroke="#bdbdbd" stroke-width="1" fill="none" /><path d="M117.5 740.5 L117.5 799" stroke="#bdbdbd" fill="none"/><path d="M114 795.5 L117.5 799 L121 795.5" stroke="#bdbdbd" fill="none"/><path d="M128.5 774.5 L171 774.5" stroke="#bdbdbd" stroke-width="1" fill="none" stroke-dasharray="3 2"/><path d="M128.5 723.5 L128.5 774.5" stroke="#bdbdbd" stroke-width="1" fill="none" stroke-dasharray="3 2"/><path d="M62 9.5 L171 9.5" stroke="#6a6a6a" fill="none"/><path d="M165 5.0 L170.5 9.5 L165 14.0" stroke="#6a6a6a" fill="none" stroke-width="1.2"/></svg>
<svg class="a" style="left:0;top:111px" width="400" height="800"><path d="M275 364 L278.5 367 L282 364" stroke="#b01818" stroke-width="1" fill="none"/><path d="M275 551 L278.5 554 L282 551" stroke="#b01818" stroke-width="1" fill="none"/><path d="M275 619 L278.5 622 L282 619" stroke="#b01818" stroke-width="1" fill="none"/><path d="M275 670 L278.5 673 L282 670" stroke="#b01818" stroke-width="1" fill="none"/><path d="M275 704 L278.5 707 L282 704" stroke="#b01818" stroke-width="1" fill="none"/><path d="M275 738 L278.5 741 L282 738" stroke="#b01818" stroke-width="1" fill="none"/><path d="M275 775 L278.5 772 L282 775" stroke="#b01818" stroke-width="1" fill="none"/></svg>
<div class="a" style="left:1240px;top:128px;width:10px;height:749px;background:#434343;border-radius:5px"></div>
<div class="a" style="left:1240px;top:135px;width:10px;height:25px;background:#6e6e6e;border-radius:5px"></div>
<div class="a" style="left:201px;top:897px;width:1019px;height:10px;background:#434343;border-radius:5px"></div>
<div class="a" style="left:201px;top:897px;width:356px;height:10px;background:#6e6e6e;border-radius:5px"></div>
<div class="a" style="left:2px;top:912px;width:1253px;height:1px;background:#555555;"></div>
<div class="a" style="left:1255px;top:111px;width:1px;height:905px;background:#555555;"></div>
<div class="a" style="left:1256px;top:111px;width:386px;height:706px;background:#212121;"></div>
<div class="a" style="left:1257px;top:111px;width:382px;height:28px;border:1px solid #2a2a32;border-radius:4px;background:#202020"></div>
<div class="a ms" style="left:1420px;top:123px;color:#e8e8e8;line-height:17px;top:119px">Hide FPU</div>
<div class="a" style="left:1306px;top:144px;width:57px;height:16px;background:#3c3c3c;"></div>
<div class="a" style="left:0;top:146px;height:16px;width:1620px"><div class="a ms" style="left:1264px;top:0;color:#b090f0;line-height:16px">EAX</div><div class="a ms" style="left:1306px;top:0;color:#e8e8e8;line-height:16px">0050BB51</div><div class="a ms" style="left:1397px;top:0;color:#f25474;line-height:16px">steigein.0050BB51</div></div>
<div class="a" style="left:0;top:162px;height:16px;width:1620px"><div class="a ms" style="left:1264px;top:0;color:#b090f0;line-height:16px">EBX</div><div class="a ms" style="left:1306px;top:0;color:#e8e8e8;line-height:16px">003C4000</div></div>
<div class="a" style="left:0;top:178px;height:16px;width:1620px"><div class="a ms" style="left:1264px;top:0;color:#b090f0;line-height:16px">ECX</div><div class="a ms" style="left:1306px;top:0;color:#e8e8e8;line-height:16px">00401000</div><div class="a ms" style="left:1397px;top:0;color:#f25474;line-height:16px">&lt;steigein.EntryPoint&gt;</div></div>
<div class="a" style="left:0;top:194px;height:16px;width:1620px"><div class="a ms" style="left:1264px;top:0;color:#b090f0;line-height:16px">EDX</div><div class="a ms" style="left:1306px;top:0;color:#e8e8e8;line-height:16px">00401000</div><div class="a ms" style="left:1397px;top:0;color:#f25474;line-height:16px">&lt;steigein.EntryPoint&gt;</div></div>
<div class="a" style="left:0;top:210px;height:16px;width:1620px"><div class="a ms" style="left:1264px;top:0;color:#b090f0;line-height:16px">EBP</div><div class="a ms" style="left:1306px;top:0;color:#e8e8e8;line-height:16px">0019FF84</div></div>
<div class="a" style="left:0;top:226px;height:16px;width:1620px"><div class="a ms" style="left:1264px;top:0;color:#b090f0;line-height:16px">ESP</div><div class="a ms" style="left:1306px;top:0;color:#e8e8e8;line-height:16px">0019FF78</div></div>
<div class="a" style="left:0;top:242px;height:16px;width:1620px"><div class="a ms" style="left:1264px;top:0;color:#b090f0;line-height:16px">ESI</div><div class="a ms" style="left:1306px;top:0;color:#e8e8e8;line-height:16px">00401000</div><div class="a ms" style="left:1397px;top:0;color:#f25474;line-height:16px">&lt;steigein.EntryPoint&gt;</div></div>
<div class="a" style="left:0;top:258px;height:16px;width:1620px"><div class="a ms" style="left:1264px;top:0;color:#b090f0;line-height:16px">EDI</div><div class="a ms" style="left:1306px;top:0;color:#e8e8e8;line-height:16px">00401000</div><div class="a ms" style="left:1397px;top:0;color:#f25474;line-height:16px">&lt;steigein.EntryPoint&gt;</div></div>
<div class="a" style="left:0;top:290px;height:16px;width:1620px"><div class="a ms" style="left:1264px;top:0;color:#b090f0;line-height:16px">EIP</div><div class="a ms" style="left:1306px;top:0;color:#f88066;line-height:16px">0050BB51</div><div class="a ms" style="left:1397px;top:0;color:#f25474;line-height:16px">steigein.0050BB51</div></div>
<div class="a" style="left:0;top:322px;height:16px;width:1620px"><div class="a ms" style="left:1264px;top:0;color:#b090f0;line-height:16px">EFLAGS</div><div class="a ms" style="left:1327px;top:0;color:#f88066;line-height:16px">00000202</div></div>
<div class="a" style="left:0;top:338px;height:16px;width:1620px"><div class="a ms" style="left:1264px;top:0;color:#b090f0;line-height:16px">ZF</div><div class="a ms" style="left:1285px;top:0;color:#e8e8e8;line-height:16px">0</div><div class="a ms" style="left:1306px;top:0;color:#b090f0;line-height:16px">PF</div><div class="a ms" style="left:1327px;top:0;color:#e8e8e8;line-height:16px">0</div><div class="a ms" style="left:1348px;top:0;color:#b090f0;line-height:16px">AF</div><div class="a ms" style="left:1369px;top:0;color:#e8e8e8;line-height:16px">0</div></div>
<div class="a" style="left:0;top:354px;height:16px;width:1620px"><div class="a ms" style="left:1264px;top:0;color:#b090f0;line-height:16px">OF</div><div class="a ms" style="left:1285px;top:0;color:#e8e8e8;line-height:16px">0</div><div class="a ms" style="left:1306px;top:0;color:#b090f0;line-height:16px">SF</div><div class="a ms" style="left:1327px;top:0;color:#e8e8e8;line-height:16px">0</div><div class="a ms" style="left:1348px;top:0;color:#b090f0;line-height:16px">DF</div><div class="a ms" style="left:1369px;top:0;color:#e8e8e8;line-height:16px">0</div></div>
<div class="a" style="left:0;top:370px;height:16px;width:1620px"><div class="a ms" style="left:1264px;top:0;color:#b090f0;line-height:16px">CF</div><div class="a ms" style="left:1285px;top:0;color:#e8e8e8;line-height:16px">0</div><div class="a ms" style="left:1306px;top:0;color:#b090f0;line-height:16px">TF</div><div class="a ms" style="left:1327px;top:0;color:#f88066;line-height:16px">0</div><div class="a ms" style="left:1348px;top:0;color:#b090f0;line-height:16px">IF</div><div class="a ms" style="left:1369px;top:0;color:#e8e8e8;line-height:16px">1</div></div>
<div class="a" style="left:0;top:402px;height:16px;width:1620px"><div class="a ms" style="left:1264px;top:0;color:#b090f0;line-height:16px">LastError</div><div class="a ms" style="left:1341px;top:0;color:#e8e8e8;line-height:16px">00000000 (ERROR_SUCCESS)</div></div>
<div class="a" style="left:0;top:418px;height:16px;width:1620px"><div class="a ms" style="left:1264px;top:0;color:#b090f0;line-height:16px">LastStatus</div><div class="a ms" style="left:1341px;top:0;color:#e8e8e8;line-height:16px">C0000034 (STATUS_OBJECT_NAME_NOT_FOUND)</div></div>
<div class="a" style="left:0;top:450px;height:16px;width:1620px"><div class="a ms" style="left:1264px;top:0;color:#b090f0;line-height:16px">GS</div><div class="a ms" style="left:1285px;top:0;color:#e8e8e8;line-height:16px">002B</div><div class="a ms" style="left:1327px;top:0;color:#b090f0;line-height:16px">FS</div><div class="a ms" style="left:1348px;top:0;color:#e8e8e8;line-height:16px">0053</div></div>
<div class="a" style="left:0;top:466px;height:16px;width:1620px"><div class="a ms" style="left:1264px;top:0;color:#b090f0;line-height:16px">ES</div><div class="a ms" style="left:1285px;top:0;color:#e8e8e8;line-height:16px">002B</div><div class="a ms" style="left:1327px;top:0;color:#b090f0;line-height:16px">DS</div><div class="a ms" style="left:1348px;top:0;color:#e8e8e8;line-height:16px">002B</div></div>
<div class="a" style="left:0;top:482px;height:16px;width:1620px"><div class="a ms" style="left:1264px;top:0;color:#b090f0;line-height:16px">CS</div><div class="a ms" style="left:1285px;top:0;color:#e8e8e8;line-height:16px">0023</div><div class="a ms" style="left:1327px;top:0;color:#b090f0;line-height:16px">SS</div><div class="a ms" style="left:1348px;top:0;color:#e8e8e8;line-height:16px">002B</div></div>
<div class="a" style="left:0;top:514px;height:16px;width:1620px"><div class="a ms" style="left:1264px;top:0;color:#b090f0;line-height:16px">ST(0)</div><div class="a ms" style="left:1306px;top:0;color:#e8e8e8;line-height:16px">00000000000000000000</div><div class="a ms" style="left:1453px;top:0;color:#f25474;line-height:16px">x87r0</div><div class="a ms" style="left:1495px;top:0;color:#f25474;line-height:16px">Empty</div><div class="a ms" style="left:1537px;top:0;color:#f25474;line-height:16px">0.0000000000</div></div>
<div class="a" style="left:0;top:530px;height:16px;width:1620px"><div class="a ms" style="left:1264px;top:0;color:#b090f0;line-height:16px">ST(1)</div><div class="a ms" style="left:1306px;top:0;color:#e8e8e8;line-height:16px">00000000000000000000</div><div class="a ms" style="left:1453px;top:0;color:#f25474;line-height:16px">x87r1</div><div class="a ms" style="left:1495px;top:0;color:#f25474;line-height:16px">Empty</div><div class="a ms" style="left:1537px;top:0;color:#f25474;line-height:16px">0.0000000000</div></div>
<div class="a" style="left:0;top:546px;height:16px;width:1620px"><div class="a ms" style="left:1264px;top:0;color:#b090f0;line-height:16px">ST(2)</div><div class="a ms" style="left:1306px;top:0;color:#e8e8e8;line-height:16px">00000000000000000000</div><div class="a ms" style="left:1453px;top:0;color:#f25474;line-height:16px">x87r2</div><div class="a ms" style="left:1495px;top:0;color:#f25474;line-height:16px">Empty</div><div class="a ms" style="left:1537px;top:0;color:#f25474;line-height:16px">0.0000000000</div></div>
<div class="a" style="left:0;top:562px;height:16px;width:1620px"><div class="a ms" style="left:1264px;top:0;color:#b090f0;line-height:16px">ST(3)</div><div class="a ms" style="left:1306px;top:0;color:#e8e8e8;line-height:16px">00000000000000000000</div><div class="a ms" style="left:1453px;top:0;color:#f25474;line-height:16px">x87r3</div><div class="a ms" style="left:1495px;top:0;color:#f25474;line-height:16px">Empty</div><div class="a ms" style="left:1537px;top:0;color:#f25474;line-height:16px">0.0000000000</div></div>
<div class="a" style="left:0;top:578px;height:16px;width:1620px"><div class="a ms" style="left:1264px;top:0;color:#b090f0;line-height:16px">ST(4)</div><div class="a ms" style="left:1306px;top:0;color:#e8e8e8;line-height:16px">00000000000000000000</div><div class="a ms" style="left:1453px;top:0;color:#f25474;line-height:16px">x87r4</div><div class="a ms" style="left:1495px;top:0;color:#f25474;line-height:16px">Empty</div><div class="a ms" style="left:1537px;top:0;color:#f25474;line-height:16px">0.0000000000</div></div>
<div class="a" style="left:0;top:594px;height:16px;width:1620px"><div class="a ms" style="left:1264px;top:0;color:#b090f0;line-height:16px">ST(5)</div><div class="a ms" style="left:1306px;top:0;color:#e8e8e8;line-height:16px">00000000000000000000</div><div class="a ms" style="left:1453px;top:0;color:#f25474;line-height:16px">x87r5</div><div class="a ms" style="left:1495px;top:0;color:#f25474;line-height:16px">Empty</div><div class="a ms" style="left:1537px;top:0;color:#f25474;line-height:16px">0.0000000000</div></div>
<div class="a" style="left:0;top:610px;height:16px;width:1620px"><div class="a ms" style="left:1264px;top:0;color:#b090f0;line-height:16px">ST(6)</div><div class="a ms" style="left:1306px;top:0;color:#e8e8e8;line-height:16px">00000000000000000000</div><div class="a ms" style="left:1453px;top:0;color:#f25474;line-height:16px">x87r6</div><div class="a ms" style="left:1495px;top:0;color:#f25474;line-height:16px">Empty</div><div class="a ms" style="left:1537px;top:0;color:#f25474;line-height:16px">0.0000000000</div></div>
<div class="a" style="left:0;top:626px;height:16px;width:1620px"><div class="a ms" style="left:1264px;top:0;color:#b090f0;line-height:16px">ST(7)</div><div class="a ms" style="left:1306px;top:0;color:#e8e8e8;line-height:16px">00000000000000000000</div><div class="a ms" style="left:1453px;top:0;color:#f25474;line-height:16px">x87r7</div><div class="a ms" style="left:1495px;top:0;color:#f25474;line-height:16px">Empty</div><div class="a ms" style="left:1537px;top:0;color:#f25474;line-height:16px">0.0000000000</div></div>
<div class="a" style="left:0;top:658px;height:16px;width:1620px"><div class="a ms" style="left:1264px;top:0;color:#b090f0;line-height:16px">x87TagWord</div><div class="a ms" style="left:1341px;top:0;color:#e8e8e8;line-height:16px">FFFF</div></div>
<div class="a" style="left:0;top:674px;height:16px;width:1620px"><div class="a ms" style="left:1264px;top:0;color:#b090f0;line-height:16px">x87TW_0</div><div class="a ms" style="left:1320px;top:0;color:#e8e8e8;line-height:16px">3</div><div class="a ms" style="left:1334px;top:0;color:#e8e8e8;line-height:16px">(Empty)</div><div class="a ms" style="left:1404px;top:0;color:#b090f0;line-height:16px">x87TW_1</div><div class="a ms" style="left:1460px;top:0;color:#e8e8e8;line-height:16px">3</div><div class="a ms" style="left:1474px;top:0;color:#e8e8e8;line-height:16px">(Empty)</div></div>
<div class="a" style="left:0;top:690px;height:16px;width:1620px"><div class="a ms" style="left:1264px;top:0;color:#b090f0;line-height:16px">x87TW_2</div><div class="a ms" style="left:1320px;top:0;color:#e8e8e8;line-height:16px">3</div><div class="a ms" style="left:1334px;top:0;color:#e8e8e8;line-height:16px">(Empty)</div><div class="a ms" style="left:1404px;top:0;color:#b090f0;line-height:16px">x87TW_3</div><div class="a ms" style="left:1460px;top:0;color:#e8e8e8;line-height:16px">3</div><div class="a ms" style="left:1474px;top:0;color:#e8e8e8;line-height:16px">(Empty)</div></div>
<div class="a" style="left:0;top:706px;height:16px;width:1620px"><div class="a ms" style="left:1264px;top:0;color:#b090f0;line-height:16px">x87TW_4</div><div class="a ms" style="left:1320px;top:0;color:#e8e8e8;line-height:16px">3</div><div class="a ms" style="left:1334px;top:0;color:#e8e8e8;line-height:16px">(Empty)</div><div class="a ms" style="left:1404px;top:0;color:#b090f0;line-height:16px">x87TW_5</div><div class="a ms" style="left:1460px;top:0;color:#e8e8e8;line-height:16px">3</div><div class="a ms" style="left:1474px;top:0;color:#e8e8e8;line-height:16px">(Empty)</div></div>
<div class="a" style="left:0;top:722px;height:16px;width:1620px"><div class="a ms" style="left:1264px;top:0;color:#b090f0;line-height:16px">x87TW_6</div><div class="a ms" style="left:1320px;top:0;color:#e8e8e8;line-height:16px">3</div><div class="a ms" style="left:1334px;top:0;color:#e8e8e8;line-height:16px">(Empty)</div><div class="a ms" style="left:1404px;top:0;color:#b090f0;line-height:16px">x87TW_7</div><div class="a ms" style="left:1460px;top:0;color:#e8e8e8;line-height:16px">3</div><div class="a ms" style="left:1474px;top:0;color:#e8e8e8;line-height:16px">(Empty)</div></div>
<div class="a" style="left:0;top:754px;height:16px;width:1620px"><div class="a ms" style="left:1264px;top:0;color:#b090f0;line-height:16px">x87StatusWord</div><div class="a ms" style="left:1362px;top:0;color:#e8e8e8;line-height:16px">0000</div></div>
<div class="a" style="left:0;top:770px;height:16px;width:1620px"><div class="a ms" style="left:1264px;top:0;color:#b090f0;line-height:16px">x87SW_B</div><div class="a ms" style="left:1327px;top:0;color:#e8e8e8;line-height:16px">0</div><div class="a ms" style="left:1348px;top:0;color:#b090f0;line-height:16px">x87SW_C3</div><div class="a ms" style="left:1418px;top:0;color:#e8e8e8;line-height:16px">0</div><div class="a ms" style="left:1439px;top:0;color:#b090f0;line-height:16px">x87SW_C2</div><div class="a ms" style="left:1509px;top:0;color:#e8e8e8;line-height:16px">0</div></div>
<div class="a" style="left:0;top:786px;height:16px;width:1620px"><div class="a ms" style="left:1264px;top:0;color:#b090f0;line-height:16px">x87SW_C1</div><div class="a ms" style="left:1327px;top:0;color:#e8e8e8;line-height:16px">0</div><div class="a ms" style="left:1348px;top:0;color:#b090f0;line-height:16px">x87SW_C0</div><div class="a ms" style="left:1418px;top:0;color:#e8e8e8;line-height:16px">0</div><div class="a ms" style="left:1439px;top:0;color:#b090f0;line-height:16px">x87SW_ES</div><div class="a ms" style="left:1509px;top:0;color:#e8e8e8;line-height:16px">0</div></div>
<div class="a" style="left:1264px;top:238px;width:21px;height:2px;background:#ff5a50;"></div>
<div class="a" style="left:1327px;top:494px;width:14px;height:2px;background:#90d020;"></div>
<div class="a" style="left:1622px;top:139px;width:20px;height:678px;background:#212121;"></div>
<svg class="a" style="left:1626px;top:143px" width="10" height="8" viewBox="0 0 10 8"><path d="M5 1 L9.5 7 L0.5 7Z" fill="#9a9a9a"/></svg>
<div class="a" style="left:1627px;top:155px;width:9px;height:615px;background:#434343;border-radius:4px"></div>
<div class="a" style="left:1627px;top:155px;width:9px;height:505px;background:#6e6e6e;border-radius:4px"></div>
<svg class="a" style="left:1626px;top:787px" width="10" height="8" viewBox="0 0 10 8"><path d="M0.5 1 L9.5 1 L5 7Z" fill="#9a9a9a"/></svg>
<svg class="a" style="left:1260px;top:801px" width="8" height="10" viewBox="0 0 8 10"><path d="M7 0.5 L7 9.5 L1 5Z" fill="#9a9a9a"/></svg>
<div class="a" style="left:1272px;top:802px;width:334px;height:9px;background:#434343;border-radius:4px"></div>
<div class="a" style="left:1272px;top:802px;width:122px;height:9px;background:#6e6e6e;border-radius:4px"></div>
<svg class="a" style="left:1612px;top:801px" width="8" height="10" viewBox="0 0 8 10"><path d="M1 0.5 L1 9.5 L7 5Z" fill="#9a9a9a"/></svg>
<div class="a" style="left:1256px;top:816px;width:386px;height:1px;background:#555555;"></div>
<div class="a" style="left:1256px;top:817px;width:386px;height:29px;background:#202020;"></div>
<div class="a ui" style="left:1261px;top:825px;color:#e8e8e8;line-height:14px">Default (stdcall)</div>
<svg class="a" style="left:1454px;top:827px" width="10" height="6" viewBox="0 0 10 6"><path d="M0.5 0.5 L9.5 0.5 L5 5.5Z" fill="#9a9a9a"/></svg>
<div class="a" style="left:1470px;top:818px;width:100px;height:26px;background:#262626;border-radius:2px"></div>
<svg class="a" style="left:1473px;top:827px" width="10" height="6" viewBox="0 0 10 6"><path d="M0.5 0.5 L9.5 0.5 L5 5.5Z" fill="#9a9a9a"/></svg>
<div class="a ui" style="left:1493px;top:825px;color:#e8e8e8;line-height:14px">5</div>
<svg class="a" style="left:1557px;top:826px" width="10" height="6" viewBox="0 0 10 6"><path d="M0.5 5.5 L9.5 5.5 L5 0.5Z" fill="#9a9a9a"/></svg>
<div class="a ui" style="left:1595px;top:824px;color:#e8e8e8;line-height:14px">Unlocked</div>
<div class="a" style="left:1256px;top:846px;width:386px;height:166px;background:#212121;"></div>
<div class="a" style="left:1257px;top:846px;width:363px;height:17px;background:#3c3c3c;"></div>
<div class="a" style="left:1256px;top:846px;width:364px;height:17px;overflow:hidden"><div class="a ms" style="left:5px;top:3px;line-height:17px;color:#e8e8e8">1: [esp+4] 003C4000 003C4000</div></div>
<div class="a" style="left:1256px;top:863px;width:364px;height:17px;overflow:hidden"><div class="a ms" style="left:5px;top:3px;line-height:17px;color:#e8e8e8">2: [esp+8] 75F87D40 &lt;kernel32.@BaseThreadInitThunk@12&gt;</div></div>
<div class="a" style="left:1256px;top:880px;width:364px;height:17px;overflow:hidden"><div class="a ms" style="left:5px;top:3px;line-height:17px;color:#e8e8e8">3: [esp+C] 0019FFDC 0019FFDC</div></div>
<div class="a" style="left:1256px;top:897px;width:364px;height:17px;overflow:hidden"><div class="a ms" style="left:5px;top:3px;line-height:17px;color:#e8e8e8">4: [esp+10] 7731B79B ntdll.7731B79B</div></div>
<div class="a" style="left:1256px;top:914px;width:364px;height:17px;overflow:hidden"><div class="a ms" style="left:5px;top:3px;line-height:17px;color:#e8e8e8">5: [esp+14] 003C4000 003C4000</div></div>
<svg class="a" style="left:1626px;top:850px" width="10" height="8" viewBox="0 0 10 8"><path d="M5 1 L9.5 7 L0.5 7Z" fill="#9a9a9a"/></svg>
<div class="a" style="left:1627px;top:862px;width:9px;height:118px;background:#6e6e6e;border-radius:4px"></div>
<svg class="a" style="left:1626px;top:984px" width="10" height="8" viewBox="0 0 10 8"><path d="M0.5 1 L9.5 1 L5 7Z" fill="#9a9a9a"/></svg>
<div class="a" style="left:1273px;top:1000px;width:332px;height:10px;background:#434343;border-radius:5px"></div>
<div class="a" style="left:1273px;top:1000px;width:249px;height:10px;background:#6e6e6e;border-radius:5px"></div>
<div class="a" style="left:1256px;top:1014px;width:386px;height:1px;background:#555555;"></div>
<div class="a" style="left:2px;top:913px;width:1253px;height:102px;background:#212121;"></div>
<div class="a ms" style="left:7px;top:918px;color:#e8e8e8;line-height:17px">60 '`'</div>
<div class="a ms" style="left:8px;top:969px;color:#e8e8e8;line-height:17px">.text:0050BB51 steigein.exe:$10BB51 #0</div>
<div class="a" style="left:2px;top:1015px;width:1640px;height:1px;background:#555555;"></div>
<div class="tab" style="top:1017px;left:3px;width:88px;height:26px;background:#2b2b2b">
<svg class="ic" style="left:10px;top:5px" width="16" height="16" viewBox="0 0 16 16"><rect x="5" y="2" width="11" height="9.5" rx="1" fill="#c8c8cc"/><g fill="#f4f4f8"><rect x="6" y="2.5" width="2" height="9"/><rect x="9.5" y="2.5" width="2" height="9"/><rect x="13" y="2.5" width="2" height="9"/></g><rect x="0.5" y="3.5" width="5" height="8" fill="#f0b020"/><rect x="0.5" y="5" width="2.5" height="3.5" fill="#3070b8"/><rect x="0" y="11.5" width="16" height="1.5" fill="#101010"/><circle cx="3.5" cy="12.5" r="1.8" fill="#101010"/><circle cx="13.5" cy="12.5" r="1.8" fill="#101010"/><circle cx="3.5" cy="12.5" r="0.7" fill="#ddd"/><circle cx="13.5" cy="12.5" r="0.7" fill="#ddd"/></svg>
<div class="lb" style="left:35px;top:6px;color:#e6e6e6">Dump 1</div>
</div>
<div class="tab" style="top:1017px;left:93px;width:88px;height:26px;background:#3c3c3c">
<svg class="ic" style="left:10px;top:5px" width="16" height="16" viewBox="0 0 16 16"><rect x="5" y="2" width="11" height="9.5" rx="1" fill="#c8c8cc"/><g fill="#f4f4f8"><rect x="6" y="2.5" width="2" height="9"/><rect x="9.5" y="2.5" width="2" height="9"/><rect x="13" y="2.5" width="2" height="9"/></g><rect x="0.5" y="3.5" width="5" height="8" fill="#f0b020"/><rect x="0.5" y="5" width="2.5" height="3.5" fill="#3070b8"/><rect x="0" y="11.5" width="16" height="1.5" fill="#101010"/><circle cx="3.5" cy="12.5" r="1.8" fill="#101010"/><circle cx="13.5" cy="12.5" r="1.8" fill="#101010"/><circle cx="3.5" cy="12.5" r="0.7" fill="#ddd"/><circle cx="13.5" cy="12.5" r="0.7" fill="#ddd"/></svg>
<div class="lb" style="left:35px;top:6px;color:#7090f0">Dump 2</div>
<div class="a" style="left:0;top:23px;width:100%;height:3px;background:#7b8ff0"></div>
</div>
<div class="tab" style="top:1017px;left:183px;width:88px;height:26px;background:#2b2b2b">
<svg class="ic" style="left:10px;top:5px" width="16" height="16" viewBox="0 0 16 16"><rect x="5" y="2" width="11" height="9.5" rx="1" fill="#c8c8cc"/><g fill="#f4f4f8"><rect x="6" y="2.5" width="2" height="9"/><rect x="9.5" y="2.5" width="2" height="9"/><rect x="13" y="2.5" width="2" height="9"/></g><rect x="0.5" y="3.5" width="5" height="8" fill="#f0b020"/><rect x="0.5" y="5" width="2.5" height="3.5" fill="#3070b8"/><rect x="0" y="11.5" width="16" height="1.5" fill="#101010"/><circle cx="3.5" cy="12.5" r="1.8" fill="#101010"/><circle cx="13.5" cy="12.5" r="1.8" fill="#101010"/><circle cx="3.5" cy="12.5" r="0.7" fill="#ddd"/><circle cx="13.5" cy="12.5" r="0.7" fill="#ddd"/></svg>
<div class="lb" style="left:35px;top:6px;color:#e6e6e6">Dump 3</div>
</div>
<div class="tab" style="top:1017px;left:273px;width:88px;height:26px;background:#2b2b2b">
<svg class="ic" style="left:10px;top:5px" width="16" height="16" viewBox="0 0 16 16"><rect x="5" y="2" width="11" height="9.5" rx="1" fill="#c8c8cc"/><g fill="#f4f4f8"><rect x="6" y="2.5" width="2" height="9"/><rect x="9.5" y="2.5" width="2" height="9"/><rect x="13" y="2.5" width="2" height="9"/></g><rect x="0.5" y="3.5" width="5" height="8" fill="#f0b020"/><rect x="0.5" y="5" width="2.5" height="3.5" fill="#3070b8"/><rect x="0" y="11.5" width="16" height="1.5" fill="#101010"/><circle cx="3.5" cy="12.5" r="1.8" fill="#101010"/><circle cx="13.5" cy="12.5" r="1.8" fill="#101010"/><circle cx="3.5" cy="12.5" r="0.7" fill="#ddd"/><circle cx="13.5" cy="12.5" r="0.7" fill="#ddd"/></svg>
<div class="lb" style="left:35px;top:6px;color:#e6e6e6">Dump 4</div>
</div>
<div class="tab" style="top:1017px;left:363px;width:88px;height:26px;background:#2b2b2b">
<svg class="ic" style="left:10px;top:5px" width="16" height="16" viewBox="0 0 16 16"><rect x="5" y="2" width="11" height="9.5" rx="1" fill="#c8c8cc"/><g fill="#f4f4f8"><rect x="6" y="2.5" width="2" height="9"/><rect x="9.5" y="2.5" width="2" height="9"/><rect x="13" y="2.5" width="2" height="9"/></g><rect x="0.5" y="3.5" width="5" height="8" fill="#f0b020"/><rect x="0.5" y="5" width="2.5" height="3.5" fill="#3070b8"/><rect x="0" y="11.5" width="16" height="1.5" fill="#101010"/><circle cx="3.5" cy="12.5" r="1.8" fill="#101010"/><circle cx="13.5" cy="12.5" r="1.8" fill="#101010"/><circle cx="3.5" cy="12.5" r="0.7" fill="#ddd"/><circle cx="13.5" cy="12.5" r="0.7" fill="#ddd"/></svg>
<div class="lb" style="left:35px;top:6px;color:#e6e6e6">Dump 5</div>
</div>
<div class="tab" style="top:1017px;left:453px;width:91px;height:26px;background:#2b2b2b">
<svg class="ic" style="left:10px;top:5px" width="16" height="16" viewBox="0 0 16 16"><circle cx="8" cy="9" r="6" fill="#e0a050"/><path d="M2 6 L3 0 L7 4Z M14 6 L13 0 L9 4Z" fill="#d08830"/><ellipse cx="8" cy="11" rx="3.5" ry="2.5" fill="#f8e8d0"/><circle cx="5.5" cy="8" r="1" fill="#222"/><circle cx="10.5" cy="8" r="1" fill="#222"/></svg>
<div class="lb" style="left:35px;top:6px;color:#e6e6e6">Watch 1</div>
</div>
<div class="tab" style="top:1017px;left:547px;width:81px;height:26px;background:#2b2b2b">
<svg class="ic" style="left:10px;top:5px" width="16" height="16" viewBox="0 0 16 16"><text x="0" y="11" font-family="Liberation Serif" font-size="11" fill="#777">[</text><text x="3.5" y="11" font-family="Liberation Serif" font-style="italic" font-size="11" fill="#b02020">x</text><text x="9" y="11" font-family="Liberation Sans" font-size="9" fill="#777">=]</text></svg>
<div class="lb" style="left:35px;top:6px;color:#e6e6e6">Locals</div>
</div>
<div class="tab" style="top:1017px;left:630px;width:81px;height:26px;background:#2b2b2b">
<svg class="ic" style="left:10px;top:5px" width="16" height="16" viewBox="0 0 16 16"><path d="M5 15 L10 6 Q12 2 9 1.5 Q6 1.5 6 4" fill="none" stroke="#e02020" stroke-width="2.5" stroke-linecap="round"/><path d="M6 12.5 L7 11 M8 9 L9 7.5 M10 3 L11 4" stroke="#fff" stroke-width="1.2"/></svg>
<div class="lb" style="left:35px;top:6px;color:#e6e6e6">Struct</div>
</div>
<div class="a" style="left:2px;top:1044px;width:991px;height:101px;background:#212121;"></div>
<div class="a" style="left:4px;top:1046px;width:63px;height:19px;border:1px solid #2c2c2c;border-radius:2px;background:#212121"></div>
<div class="a ms" style="left:8px;top:1049px;color:#e8e8e8;line-height:17px">Address</div>
<div class="a" style="left:68px;top:1046px;width:336px;height:19px;border:1px solid #2c2c2c;border-radius:2px;background:#212121"></div>
<div class="a ms" style="left:72px;top:1049px;color:#e8e8e8;line-height:17px">Hex</div>
<div class="a" style="left:405px;top:1046px;width:120px;height:19px;border:1px solid #2c2c2c;border-radius:2px;background:#212121"></div>
<div class="a ms" style="left:409px;top:1049px;color:#e8e8e8;line-height:17px">ASCII</div>
<div class="a" style="left:526px;top:1046px;width:450px;height:19px;border:1px solid #2c2c2c;border-radius:2px;background:#212121"></div>
<div class="a" style="left:2px;top:1065px;width:974px;height:60px;overflow:hidden">
<div class="a" style="left:66px;top:0;width:22px;height:17px;background:#3c3c3c"></div>
<div class="a" style="left:403px;top:0;width:10px;height:17px;background:#3c3c3c"></div>
<div class="a ms" style="left:7px;top:4px;line-height:17px;color:#bdbdbd">02A00000</div>
<div class="a ms" style="left:70px;top:4px;line-height:17px;color:#e8e8e8">08 00 00 00</div>
<div class="a ms" style="left:154px;top:4px;line-height:17px;color:#e8e8e8">00 00 00 00</div>
<div class="a ms" style="left:238px;top:4px;line-height:17px;color:#e8e8e8">E9 60 08 00</div>
<div class="a ms" style="left:322px;top:4px;line-height:17px;color:#e8e8e8">00 83 EC 30</div>
<div class="a ms" style="left:408px;top:4px;line-height:17px;color:#e8e8e8">........é`....ì0</div>
<div class="a ms" style="left:7px;top:21px;line-height:17px;color:#bdbdbd">02A00010</div>
<div class="a ms" style="left:70px;top:21px;line-height:17px;color:#e8e8e8">8B 44 24 34</div>
<div class="a ms" style="left:154px;top:21px;line-height:17px;color:#e8e8e8">8B 48 08 53</div>
<div class="a ms" style="left:238px;top:21px;line-height:17px;color:#e8e8e8">55 56 BE 01</div>
<div class="a ms" style="left:322px;top:21px;line-height:17px;color:#e8e8e8">00 00 00 8B</div>
<div class="a ms" style="left:408px;top:21px;line-height:17px;color:#e8e8e8">.D$4.H.SUV¾.....</div>
<div class="a ms" style="left:7px;top:38px;line-height:17px;color:#bdbdbd">02A00020</div>
<div class="a ms" style="left:70px;top:38px;line-height:17px;color:#e8e8e8">DE D3 E3 8B</div>
<div class="a ms" style="left:154px;top:38px;line-height:17px;color:#e8e8e8">48 04 57 8B</div>
<div class="a ms" style="left:238px;top:38px;line-height:17px;color:#e8e8e8">78 0C 8B 00</div>
<div class="a ms" style="left:322px;top:38px;line-height:17px;color:#e8e8e8">8B D6 D3 E2</div>
<div class="a ms" style="left:408px;top:38px;line-height:17px;color:#e8e8e8">ÞÓã.H.W.x....ÖÓâ</div>
<div class="a ms" style="left:7px;top:55px;line-height:17px;color:#bdbdbd">02A00030</div>
<div class="a ms" style="left:70px;top:55px;line-height:17px;color:#e8e8e8">89 44 24 34</div>
<div class="a ms" style="left:154px;top:55px;line-height:17px;color:#e8e8e8">03 C8 B8 00</div>
<div class="a ms" style="left:238px;top:55px;line-height:17px;color:#e8e8e8">03 00 00 D3</div>
<div class="a ms" style="left:322px;top:55px;line-height:17px;color:#e8e8e8">E0 33 FD 2B</div>
<div class="a ms" style="left:408px;top:55px;line-height:17px;color:#e8e8e8">.D$4.È¸....Óà3ý+</div>
</div>
<div class="a" style="left:68px;top:1065px;width:1px;height:60px;background:#555555;"></div>
<div class="a" style="left:152px;top:1065px;width:1px;height:60px;background:#555555;"></div>
<div class="a" style="left:236px;top:1065px;width:1px;height:60px;background:#555555;"></div>
<div class="a" style="left:320px;top:1065px;width:1px;height:60px;background:#555555;"></div>
<div class="a" style="left:404px;top:1065px;width:1px;height:60px;background:#555555;"></div>
<div class="a" style="left:524px;top:1065px;width:1px;height:60px;background:#555555;"></div>
<svg class="a" style="left:977px;top:1049px" width="10" height="8" viewBox="0 0 10 8"><path d="M5 1 L9.5 7 L0.5 7Z" fill="#9a9a9a"/></svg>
<div class="a" style="left:977px;top:1060px;width:10px;height:49px;background:#434343;border-radius:5px"></div>
<div class="a" style="left:977px;top:1060px;width:10px;height:25px;background:#6e6e6e;border-radius:5px"></div>
<svg class="a" style="left:977px;top:1113px" width="10" height="8" viewBox="0 0 10 8"><path d="M0.5 1 L9.5 1 L5 7Z" fill="#9a9a9a"/></svg>
<div class="a" style="left:20px;top:1129px;width:937px;height:10px;background:#434343;border-radius:5px"></div>
<div class="a" style="left:20px;top:1129px;width:504px;height:10px;background:#6e6e6e;border-radius:5px"></div>
<div class="a" style="left:993px;top:1016px;width:1px;height:129px;background:#555555;"></div>
<div class="a" style="left:994px;top:1016px;width:648px;height:129px;background:#212121;"></div>
<div class="a" style="left:994px;top:1017px;width:626px;height:109px;overflow:hidden">
<div class="a" style="left:1px;top:0;width:625px;height:17px;background:#3c3c3c"></div>
<div class="a ms" style="left:6px;top:4px;line-height:17px;color:#98f040">0019FF78</div>
<div class="a ms" style="left:69px;top:4px;line-height:17px;color:#e8e8e8">75F87D59</div>
<div class="a ms" style="left:135px;top:4px;line-height:17px;color:#f25474">return to kernel32.@BaseThreadInitThunk@12+19 from ???</div>
<div class="a ms" style="left:6px;top:21px;line-height:17px;color:#bdbdbd">0019FF7C</div>
<div class="a ms" style="left:69px;top:21px;line-height:17px;color:#e8e8e8">003C4000</div>
<div class="a ms" style="left:6px;top:38px;line-height:17px;color:#b090f0">0019FF80</div>
<div class="a ms" style="left:69px;top:38px;line-height:17px;color:#e8e8e8">75F87D40</div>
<div class="a ms" style="left:135px;top:38px;line-height:17px;color:#e8e8e8">kernel32.@BaseThreadInitThunk@12</div>
<div class="a ms" style="left:6px;top:55px;line-height:17px;color:#bdbdbd">0019FF84</div>
<div class="a ms" style="left:69px;top:55px;line-height:17px;color:#e8e8e8">0019FFDC</div>
<div class="a ms" style="left:6px;top:72px;line-height:17px;color:#bdbdbd">0019FF88</div>
<div class="a ms" style="left:72px;top:72px;line-height:17px;color:#e8e8e8">7731B79B</div>
<div class="a ms" style="left:135px;top:72px;line-height:17px;color:#f25474">return to ntdll.___RtlUserThreadStart@8+2B from ???</div>
<div class="a ms" style="left:6px;top:89px;line-height:17px;color:#bdbdbd">0019FF8C</div>
<div class="a ms" style="left:72px;top:89px;line-height:17px;color:#e8e8e8">003C4000</div>
<div class="a ms" style="left:6px;top:106px;line-height:17px;color:#bdbdbd">0019FF90</div>
<div class="a ms" style="left:72px;top:106px;line-height:17px;color:#e8e8e8">F1C5C8C6</div>
</div>
<div class="a" style="left:1058px;top:1017px;width:1px;height:109px;background:#555555;"></div>
<div class="a" style="left:1124px;top:1017px;width:1px;height:109px;background:#555555;"></div>
<div class="a" style="left:1060px;top:1088px;width:2px;height:38px;background:#f07060;"></div>
<div class="a" style="left:1060px;top:1088px;width:5px;height:2px;background:#f07060;"></div>
<svg class="a" style="left:1625px;top:1021px" width="10" height="8" viewBox="0 0 10 8"><path d="M5 1 L9.5 7 L0.5 7Z" fill="#9a9a9a"/></svg>
<div class="a" style="left:1626px;top:1034px;width:9px;height:75px;background:#434343;border-radius:4px"></div>
<div class="a" style="left:1626px;top:1087px;width:9px;height:22px;background:#6e6e6e;border-radius:4px"></div>
<svg class="a" style="left:1625px;top:1114px" width="10" height="8" viewBox="0 0 10 8"><path d="M0.5 1 L9.5 1 L5 7Z" fill="#9a9a9a"/></svg>
<svg class="a" style="left:999px;top:1130px" width="8" height="10" viewBox="0 0 8 10"><path d="M7 0.5 L7 9.5 L1 5Z" fill="#9a9a9a"/></svg>
<div class="a" style="left:1010px;top:1129px;width:595px;height:11px;background:#434343;border-radius:5px"></div>
<div class="a" style="left:1010px;top:1129px;width:180px;height:11px;background:#6e6e6e;border-radius:5px"></div>
<svg class="a" style="left:1609px;top:1130px" width="8" height="10" viewBox="0 0 8 10"><path d="M1 0.5 L1 9.5 L7 5Z" fill="#9a9a9a"/></svg>
<div class="a ui" style="left:2px;top:1155px;color:#e8e8e8;line-height:14px">Command:</div>
<div class="a" style="left:57px;top:1151px;width:1476px;height:20px;background:#333333;border-radius:2px"></div>
<div class="a ui" style="left:1541px;top:1155px;color:#e8e8e8;line-height:14px">Default</div>
<svg class="a" style="left:1626px;top:1158px" width="10" height="6" viewBox="0 0 10 6"><path d="M0.5 0.5 L9.5 0.5 L5 5.5Z" fill="#9a9a9a"/></svg>
<div class="a ui" style="left:16px;top:1181px;color:#9a9a40;line-height:14px">Paused</div>
<div class="a ui" style="left:73px;top:1181px;color:#e8e8e8;line-height:14px">Scylla is already loaded</div>
<div class="a ui" style="left:1464px;top:1181px;color:#e8e8e8;line-height:14px;letter-spacing:-0.07px">Time Wasted Debugging: 0:19:31:00</div>
<div class="a" style="left:582px;top:252px;width:588px;height:644px;border-radius:8px;box-shadow:0 4px 14px rgba(0,0,0,0.22)"></div>
<div class="a" style="left:582px;top:252px;width:588px;height:644px;background:#f0f0f0;border-radius:8px;overflow:hidden">
<div class="a" style="left:0;top:0;width:588px;height:30px;background:#121212"></div>
<svg class="a" style="left:8px;top:6px" width="17" height="17" viewBox="0 0 17 17"><rect x="0.5" y="0.5" width="16" height="16" rx="2" fill="#3a3232"/><text x="8.5" y="14" font-family="Liberation Serif" font-weight="bold" font-size="15" fill="#d06068" text-anchor="middle">S</text></svg>
<div class="a" style="left:30px;top:8px;font-family:'Liberation Sans';font-size:11.5px;color:#ffffff;white-space:pre;line-height:14px">Scylla x86 v0.9.8</div>
<div class="a" style="left:467px;top:15px;width:10px;height:1px;background:#ffffff"></div>
<div class="a" style="left:512px;top:10px;width:10px;height:10px;border:1px solid #6a6a6a"></div>
<svg class="a" style="left:557px;top:9px" width="11" height="11"><path d="M0.5 0.5 L10.5 10.5 M10.5 0.5 L0.5 10.5" stroke="#ffffff" stroke-width="1.1"/></svg>
<div class="a" style="left:0;top:30px;width:588px;height:18px;background:#ffffff"></div>
<div class="a dlg" style="left:8px;top:32px;line-height:14px">File</div>
<div class="a dlg" style="left:40px;top:32px;line-height:14px">Imports</div>
<div class="a dlg" style="left:95px;top:32px;line-height:14px">Trace</div>
<div class="a dlg" style="left:136px;top:32px;line-height:14px">Misc</div>
<div class="a dlg" style="left:175px;top:32px;line-height:14px">Help</div>
<div class="grp" style="left:12px;top:68px;width:564px;height:47px"></div>
<div class="gl" style="left:226px;top:61px">Attach to an active process</div>
<div class="a" style="left:22px;top:82px;width:479px;height:21px;background:#fff;border:1px solid #cccccc;border-radius:3px"></div>
<div class="a dlg" style="left:26px;top:86px;line-height:14px">11904 - steigein.exe - Y:\steig_ein_writeup\steig_ein\steig_ein\steigein.exe</div>
<svg class="a" style="left:487px;top:90px" width="10" height="6"><path d="M0.5 0.5 L5 5 L9.5 0.5" stroke="#444" fill="none"/></svg>
<div class="btn" style="left:509px;top:81px;width:54px;height:22px;line-height:20px;">Pick DLL</div>
<div class="grp" style="left:12px;top:130px;width:564px;height:236px"></div>
<div class="gl" style="left:271px;top:123px">Imports</div>
<div class="a" style="left:22px;top:140px;width:543px;height:189px;background:#fff;border:1px solid #828790;overflow:hidden">
<svg class="a" style="left:0;top:0" width="60" height="189"><rect x="9.5" y="5.5" width="8" height="8" fill="#fff" stroke="#8a8a8a"/><path d="M11.5 9.5 L15.5 9.5 M13.5 7.5 L13.5 11.5" stroke="#2050a0"/><path d="M18 9.5 L24 9.5" stroke="#a0a0a0" stroke-dasharray="1 1"/><path d="M26 10 L29 13 L35 6" stroke="#30a030" stroke-width="2.2" fill="none"/><rect x="9.5" y="21.5" width="8" height="8" fill="#fff" stroke="#8a8a8a"/><path d="M11.5 25.5 L15.5 25.5 M13.5 23.5 L13.5 27.5" stroke="#2050a0"/><path d="M18 25.5 L24 25.5" stroke="#a0a0a0" stroke-dasharray="1 1"/><path d="M26 26 L29 29 L35 22" stroke="#30a030" stroke-width="2.2" fill="none"/><rect x="9.5" y="37.5" width="8" height="8" fill="#fff" stroke="#8a8a8a"/><path d="M11.5 41.5 L15.5 41.5 M13.5 39.5 L13.5 43.5" stroke="#2050a0"/><path d="M18 41.5 L24 41.5" stroke="#a0a0a0" stroke-dasharray="1 1"/><path d="M26 42 L29 45 L35 38" stroke="#30a030" stroke-width="2.2" fill="none"/><rect x="9.5" y="53.5" width="8" height="8" fill="#fff" stroke="#8a8a8a"/><path d="M11.5 57.5 L15.5 57.5 M13.5 55.5 L13.5 59.5" stroke="#2050a0"/><path d="M18 57.5 L24 57.5" stroke="#a0a0a0" stroke-dasharray="1 1"/><path d="M26 58 L29 61 L35 54" stroke="#30a030" stroke-width="2.2" fill="none"/><rect x="9.5" y="69.5" width="8" height="8" fill="#fff" stroke="#8a8a8a"/><path d="M11.5 73.5 L15.5 73.5 M13.5 71.5 L13.5 75.5" stroke="#2050a0"/><path d="M18 73.5 L24 73.5" stroke="#a0a0a0" stroke-dasharray="1 1"/><path d="M26 74 L29 77 L35 70" stroke="#30a030" stroke-width="2.2" fill="none"/><rect x="9.5" y="85.5" width="8" height="8" fill="#fff" stroke="#8a8a8a"/><path d="M11.5 89.5 L15.5 89.5 M13.5 87.5 L13.5 91.5" stroke="#2050a0"/><path d="M18 89.5 L24 89.5" stroke="#a0a0a0" stroke-dasharray="1 1"/><path d="M26 90 L29 93 L35 86" stroke="#30a030" stroke-width="2.2" fill="none"/><rect x="9.5" y="101.5" width="8" height="8" fill="#fff" stroke="#8a8a8a"/><path d="M11.5 105.5 L15.5 105.5 M13.5 103.5 L13.5 107.5" stroke="#2050a0"/><path d="M18 105.5 L24 105.5" stroke="#a0a0a0" stroke-dasharray="1 1"/><path d="M26 106 L29 109 L35 102" stroke="#30a030" stroke-width="2.2" fill="none"/><rect x="9.5" y="117.5" width="8" height="8" fill="#fff" stroke="#8a8a8a"/><path d="M11.5 121.5 L15.5 121.5 M13.5 119.5 L13.5 123.5" stroke="#2050a0"/><path d="M18 121.5 L24 121.5" stroke="#a0a0a0" stroke-dasharray="1 1"/><path d="M26 122 L29 125 L35 118" stroke="#30a030" stroke-width="2.2" fill="none"/><rect x="9.5" y="133.5" width="8" height="8" fill="#fff" stroke="#8a8a8a"/><path d="M11.5 137.5 L15.5 137.5 M13.5 135.5 L13.5 139.5" stroke="#2050a0"/><path d="M18 137.5 L24 137.5" stroke="#a0a0a0" stroke-dasharray="1 1"/><path d="M26 138 L29 141 L35 134" stroke="#30a030" stroke-width="2.2" fill="none"/><rect x="9.5" y="149.5" width="8" height="8" fill="#fff" stroke="#8a8a8a"/><path d="M11.5 153.5 L15.5 153.5 M13.5 151.5 L13.5 155.5" stroke="#2050a0"/><path d="M18 153.5 L24 153.5" stroke="#a0a0a0" stroke-dasharray="1 1"/><path d="M26 154 L29 157 L35 150" stroke="#30a030" stroke-width="2.2" fill="none"/><rect x="9.5" y="165.5" width="8" height="8" fill="#fff" stroke="#8a8a8a"/><path d="M11.5 169.5 L15.5 169.5 M13.5 167.5 L13.5 171.5" stroke="#2050a0"/><path d="M18 169.5 L24 169.5" stroke="#a0a0a0" stroke-dasharray="1 1"/><path d="M26 170 L29 173 L35 166" stroke="#30a030" stroke-width="2.2" fill="none"/><rect x="9.5" y="181.5" width="8" height="8" fill="#fff" stroke="#8a8a8a"/><path d="M11.5 185.5 L15.5 185.5 M13.5 183.5 L13.5 187.5" stroke="#2050a0"/><path d="M18 185.5 L24 185.5" stroke="#a0a0a0" stroke-dasharray="1 1"/><path d="M26 186 L29 189 L35 182" stroke="#30a030" stroke-width="2.2" fill="none"/><path d="M13.5 0 L13.5 5 M13.5 14 L13.5 21 M13.5 30 L13.5 37 M13.5 46 L13.5 53 M13.5 62 L13.5 69 M13.5 78 L13.5 85 M13.5 94 L13.5 101 M13.5 110 L13.5 117 M13.5 126 L13.5 133 M13.5 142 L13.5 149 M13.5 158 L13.5 165 M13.5 174 L13.5 181" stroke="#a0a0a0" stroke-dasharray="1 1"/></svg>
<div class="a dlg" style="left:43px;top:1px;line-height:14px;letter-spacing:-0.1px">advapi32.dll (17) FThunk: 0013B000</div>
<div class="a dlg" style="left:43px;top:17px;line-height:14px;letter-spacing:-0.1px">comctl32.dll (17) FThunk: 0013B048</div>
<div class="a dlg" style="left:43px;top:33px;line-height:14px;letter-spacing:-0.1px">gdi32.dll (74) FThunk: 0013B090</div>
<div class="a dlg" style="left:43px;top:49px;line-height:14px;letter-spacing:-0.1px">kernel32.dll (168) FThunk: 0013B1BC</div>
<div class="a dlg" style="left:43px;top:65px;line-height:14px;letter-spacing:-0.1px">mpr.dll (3) FThunk: 0013B460</div>
<div class="a dlg" style="left:43px;top:81px;line-height:14px;letter-spacing:-0.1px">oleaut32.dll (16) FThunk: 0013B470</div>
<div class="a dlg" style="left:43px;top:97px;line-height:14px;letter-spacing:-0.1px">setupapi.dll (4) FThunk: 0013B4B4</div>
<div class="a dlg" style="left:43px;top:113px;line-height:14px;letter-spacing:-0.1px">shell32.dll (10) FThunk: 0013B4C8</div>
<div class="a dlg" style="left:43px;top:129px;line-height:14px;letter-spacing:-0.1px">shlwapi.dll (7) FThunk: 0013B4F4</div>
<div class="a dlg" style="left:43px;top:145px;line-height:14px;letter-spacing:-0.1px">user32.dll (177) FThunk: 0013B514</div>
<div class="a dlg" style="left:43px;top:161px;line-height:14px;letter-spacing:-0.1px">version.dll (3) FThunk: 0013B7DC</div>
<div class="a dlg" style="left:43px;top:177px;line-height:14px;letter-spacing:-0.1px">winspool.drv (3) FThunk: 0013B7EC</div>
<div class="a" style="left:524px;top:0;width:17px;height:187px;background:#f6f6f6"></div>
<div class="a" style="left:532px;top:18px;width:2px;height:88px;background:#858585;border-radius:1px"></div>
</div>
<div class="btn" style="left:23px;top:335px;width:84px;height:23px;line-height:21px;">Show Invalid</div>
<div class="btn" style="left:118px;top:335px;width:85px;height:23px;line-height:21px;">Show Suspect</div>
<div class="btn" style="left:502px;top:335px;width:61px;height:23px;line-height:21px;">Clear</div>
<div class="grp" style="left:12px;top:382px;width:279px;height:93px"></div>
<div class="gl" style="left:128px;top:375px">IAT Info</div>
<div class="a dlg" style="left:20px;top:399px;line-height:14px">OEP</div>
<div class="a" style="left:52px;top:398px;width:126px;height:19px;background:#fff;border:1px solid #e0e0e0;border-bottom:1px solid #8a8a8a;border-radius:2px"></div>
<div class="a dlg" style="left:57px;top:399px;line-height:14px">0050BB51</div>
<div class="a dlg" style="left:20px;top:424px;line-height:14px">VA</div>
<div class="a" style="left:52px;top:423px;width:126px;height:19px;background:#fff;border:1px solid #e0e0e0;border-bottom:1px solid #8a8a8a;border-radius:2px"></div>
<div class="a dlg" style="left:57px;top:424px;line-height:14px">0053B000</div>
<div class="a dlg" style="left:20px;top:448px;line-height:14px">Size</div>
<div class="a" style="left:52px;top:447px;width:126px;height:19px;background:#fff;border:1px solid #e0e0e0;border-bottom:1px solid #8a8a8a;border-radius:2px"></div>
<div class="a dlg" style="left:57px;top:448px;line-height:14px">0000092C</div>
<div class="btn" style="left:191px;top:401px;width:88px;height:24px;line-height:22px;">IAT Autosearch</div>
<div class="btn" style="left:191px;top:434px;width:88px;height:25px;line-height:23px;border:1px solid #0067c0;box-shadow:inset 0 0 0 0.5px #0067c0">Get Imports</div>
<div class="grp" style="left:301px;top:382px;width:105px;height:93px"></div>
<div class="gl" style="left:333px;top:375px">Actions</div>
<div class="btn" style="left:312px;top:401px;width:83px;height:20px;line-height:18px;background:#f5f5f5;border-color:#e6e6e6;color:#a0a0a0">Autotrace</div>
<div class="grp" style="left:417px;top:382px;width:159px;height:93px"></div>
<div class="gl" style="left:480px;top:375px">Dump</div>
<div class="btn" style="left:433px;top:403px;width:48px;height:22px;line-height:20px;">Dump</div>
<div class="btn" style="left:493px;top:403px;width:72px;height:22px;line-height:20px;">PE Rebuild</div>
<div class="btn" style="left:433px;top:436px;width:132px;height:24px;line-height:22px;">Fix Dump</div>
<div class="grp" style="left:12px;top:492px;width:564px;height:116px"></div>
<div class="gl" style="left:281px;top:485px">Log</div>
<div class="a" style="left:22px;top:506px;width:543px;height:91px;background:#fff;border:1px solid #828790;overflow:hidden">
<div class="a" style="left:1px;top:66px;width:522px;height:13px;background:#0078d7"></div>
<div class="a dlg" style="left:2px;top:1px;line-height:13px;color:#000000;letter-spacing:-0.2px">IAT Search Adv: IAT VA 0053B000 RVA 0013B000 Size 0x0928 (2344)</div>
<div class="a dlg" style="left:2px;top:14px;line-height:13px;color:#000000;letter-spacing:-0.2px">IAT Search Nor: IAT VA 0053B000 RVA 0013B000 Size 0x092C (2348)</div>
<div class="a dlg" style="left:2px;top:27px;line-height:13px;color:#000000;letter-spacing:-0.2px">IAT parsing finished, found 568 valid APIs, missed 0 APIs</div>
<div class="a dlg" style="left:2px;top:40px;line-height:13px;color:#000000;letter-spacing:-0.2px">DIRECT IMPORTS - Found 1 possible direct imports with 1 unique APIs!</div>
<div class="a dlg" style="left:2px;top:53px;line-height:13px;color:#000000;letter-spacing:-0.2px">DIRECT IMPORTS - Found 1 additional api addresses!</div>
<div class="a dlg" style="left:2px;top:66px;line-height:13px;color:#ffffff;letter-spacing:-0.2px">DIRECT IMPORTS - Old IAT size 0x00000928 new IAT size 0x0000092C!</div>
<div class="a" style="left:524px;top:0;width:17px;height:89px;background:#f6f6f6"></div>
<div class="a" style="left:531px;top:54px;width:2px;height:16px;background:#858585;border-radius:1px"></div>
</div>
<div class="a" style="left:0;top:619px;width:588px;height:1px;background:#dadada"></div>
<div class="a" style="left:117px;top:622px;width:1px;height:21px;background:#dadada"></div>
<div class="a" style="left:234px;top:622px;width:1px;height:21px;background:#dadada"></div>
<div class="a" style="left:429px;top:622px;width:1px;height:21px;background:#dadada"></div>
<div class="a dlg" style="left:27px;top:625px;line-height:14px">Imports: 568</div>
<svg class="a" style="left:146px;top:627px" width="12" height="10"><path d="M1 5 L4 8 L11 1" stroke="#30a030" stroke-width="2.2" fill="none"/></svg>
<div class="a dlg" style="left:164px;top:625px;line-height:14px">Invalid: 0</div>
<div class="a dlg" style="left:278px;top:625px;line-height:14px">Imagebase: 00400000</div>
<div class="a dlg" style="left:434px;top:625px;line-height:14px">steigein.exe</div>
<svg class="a" style="left:574px;top:631px" width="10" height="10"><g fill="#b0b0b0"><rect x="7" y="1" width="2" height="2"/><rect x="4" y="4" width="2" height="2"/><rect x="7" y="4" width="2" height="2"/><rect x="1" y="7" width="2" height="2"/><rect x="4" y="7" width="2" height="2"/><rect x="7" y="7" width="2" height="2"/></g></svg>
</div>
<div class="a" style="left:582px;top:252px;width:588px;height:644px;border:1px solid #101010;border-radius:8px"></div>
<div class="a" style="left:0;top:0;width:1642px;height:1px;background:#2a2a2a"></div>
<div class="a" style="left:0;top:1px;width:1642px;height:1199px;border:1px solid #3a3a3a;border-radius:8px;pointer-events:none"></div>
</body></html>
